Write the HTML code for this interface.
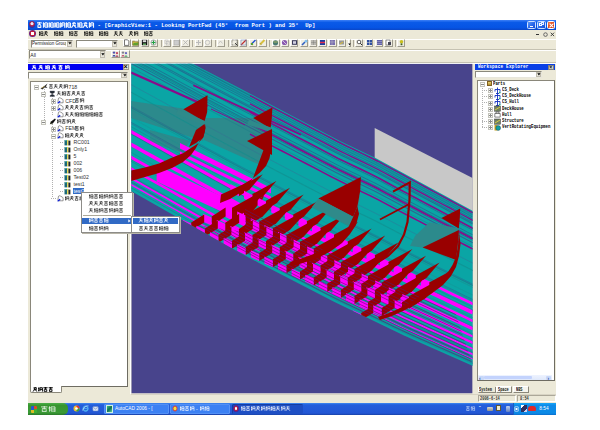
<!DOCTYPE html><html><head><meta charset="utf-8"><style>
html,body{margin:0;padding:0;width:600px;height:430px;overflow:hidden;background:#fff;font-family:"Liberation Sans",sans-serif;}
div{box-sizing:border-box;}
svg{display:block}
</style></head><body>
<div style="position:absolute;left:28px;top:20px;width:528px;height:395px;background:#ECE9D8"></div>
<div style="position:absolute;left:28px;top:20px;width:528px;height:10px;background:linear-gradient(#3d80f6 0,#0a5ae8 25%,#0654e4 75%,#0a46c8 100%)"></div>
<div style="position:absolute;left:29px;top:21px;width:6px;height:7px;border-radius:50%;background:radial-gradient(circle at 50% 40%,#e0e8ff 0 25%,#c02040 35%,#3030a0 70%)"></div>
<svg style="position:absolute;left:37px;top:22px;overflow:visible" width="57.5" height="6"><path d="M0.00 0.90L4.75 0.90M2.38 0.00L2.38 3.30M0.71 2.70L4.04 2.70M0.95 3.30L0.95 5.70M3.80 3.30L3.80 5.70M0.95 5.40L3.80 5.40M6.46 0.30L6.46 5.70M5.75 2.10L7.17 1.50M7.77 0.90L10.50 0.90M7.77 0.90L7.77 5.10M10.50 0.90L10.50 5.80M7.77 3.00L10.50 3.00M7.77 5.10L10.50 5.10M12.21 0.30L12.21 5.70M11.50 2.10L12.93 1.50M11.50 4.50L12.93 3.60M13.53 0.90L16.25 0.90M13.53 0.90L13.53 5.10M16.25 0.90L16.25 5.80M13.53 3.00L16.25 3.00M13.53 5.10L16.25 5.10M17.96 0.30L17.96 5.70M17.25 2.10L18.68 1.50M17.25 4.50L18.68 3.60M19.28 0.90L22.00 0.90M19.28 0.90L19.28 5.10M22.00 0.90L22.00 5.80M19.28 3.00L22.00 3.00M19.28 5.10L22.00 5.10M23.71 0.30L23.71 5.70M23.00 2.10L24.43 1.50M23.00 4.50L24.43 3.60M25.03 0.90L27.75 0.90M25.03 0.90L25.03 5.10M27.75 0.90L27.75 5.80M25.03 3.00L27.75 3.00M29.46 0.30L29.46 5.70M28.75 2.10L30.18 1.50M30.78 0.90L33.50 0.90M30.78 0.90L30.78 5.10M33.50 0.90L33.50 5.80M30.78 3.00L33.50 3.00M30.78 5.10L33.50 5.10M34.98 1.20L38.77 1.20M36.88 0.10L35.92 3.60M35.92 3.60L34.50 5.80M36.64 3.00L39.25 5.80M35.45 3.30L38.77 3.30M37.35 0.30L38.54 2.10M40.96 0.30L40.96 5.70M40.25 2.10L41.67 1.50M42.27 0.90L45.00 0.90M42.27 0.90L42.27 5.10M45.00 0.90L45.00 5.80M42.27 3.00L45.00 3.00M42.27 5.10L45.00 5.10M46.48 1.20L50.27 1.20M48.38 0.10L47.42 3.60M47.42 3.60L46.00 5.80M48.14 3.00L50.75 5.80M46.95 3.30L50.27 3.30M48.85 0.30L50.04 2.10M52.46 0.30L52.46 5.70M51.75 2.10L53.17 1.50M51.75 4.50L53.17 3.60M53.77 0.90L56.50 0.90M53.77 0.90L53.77 5.10M56.50 0.90L56.50 5.80M53.77 3.00L56.50 3.00" stroke="#fff" stroke-opacity="0.95" stroke-width="1.15" fill="none"/></svg>
<div style="position:absolute;left:97.5px;top:20.5px;white-space:nowrap;font:bold 5.5px/9px 'Liberation Mono';color:#fff;white-space:pre;letter-spacing:0.05px">- [GraphicView:1 - Looking PortFwd (45&deg;  from Port ) and 35&deg;  Up]</div>
<div style="position:absolute;left:527px;top:21px;width:9px;height:7.8px;background:linear-gradient(135deg,#5a9af8,#2563e8 60%,#1a50d0);border:0.7px solid #cfe0ff;border-radius:1.5px"></div>
<div style="position:absolute;left:529.5px;top:26px;width:3.5px;height:1.1px;background:#fff"></div>
<div style="position:absolute;left:536.7px;top:21px;width:9px;height:7.8px;background:linear-gradient(135deg,#5a9af8,#2563e8 60%,#1a50d0);border:0.7px solid #cfe0ff;border-radius:1.5px"></div>
<div style="position:absolute;left:539.2px;top:23px;width:3.2px;height:2.8px;border:0.7px solid #fff;border-top-width:1px"></div>
<div style="position:absolute;left:540.6px;top:22.2px;width:3px;height:2.6px;border:0.6px solid #e8f0ff;border-top-width:0.9px"></div>
<div style="position:absolute;left:546.8px;top:21px;width:8.6px;height:8px;background:linear-gradient(135deg,#f08050,#e04a20 55%,#c83a10);border:0.7px solid #fff;border-radius:1.5px"></div>
<svg style="position:absolute;left:548.6px;top:22.6px" width="5" height="5"><path d="M.6 .6l3.8 3.8M4.4 .6L.6 4.4" stroke="#fff" stroke-width="1.1"/></svg>
<div style="position:absolute;left:29px;top:30px;width:7px;height:7px;border-radius:50%;background:radial-gradient(circle at 50% 50%,#fff 0 30%,#d02030 40%,#4020a0 75%)"></div>
<svg style="position:absolute;left:38.5px;top:31.3px;overflow:visible" width="9.8" height="5.2"><path d="M0.59 0.30L0.59 4.90M0.00 1.82L1.17 1.30M0.00 3.90L1.17 3.12M1.77 0.78L3.90 0.78M1.77 0.78L1.77 4.42M3.90 0.78L3.90 5.00M1.77 2.60L3.90 2.60M1.77 4.42L3.90 4.42M5.29 1.04L8.41 1.04M6.85 0.10L6.07 3.12M6.07 3.12L4.90 5.00M6.66 2.60L8.80 5.00M5.68 2.86L8.41 2.86M7.24 0.26L8.21 1.82" stroke="#000" stroke-opacity="0.9" stroke-width="0.75" fill="none"/></svg>
<svg style="position:absolute;left:53.5px;top:31.3px;overflow:visible" width="9.8" height="5.2"><path d="M0.59 0.30L0.59 4.90M0.00 1.82L1.17 1.30M1.77 0.78L3.90 0.78M1.77 0.78L1.77 4.42M3.90 0.78L3.90 5.00M1.77 2.60L3.90 2.60M1.77 4.42L3.90 4.42M5.49 0.30L5.49 4.90M4.90 1.82L6.07 1.30M6.67 0.78L8.80 0.78M6.67 0.78L6.67 4.42M8.80 0.78L8.80 5.00M6.67 2.60L8.80 2.60M6.67 4.42L8.80 4.42" stroke="#000" stroke-opacity="0.9" stroke-width="0.75" fill="none"/></svg>
<svg style="position:absolute;left:68.5px;top:31.3px;overflow:visible" width="9.8" height="5.2"><path d="M0.59 0.30L0.59 4.90M0.00 1.82L1.17 1.30M1.77 0.78L3.90 0.78M1.77 0.78L1.77 4.42M3.90 0.78L3.90 5.00M1.77 2.60L3.90 2.60M1.77 4.42L3.90 4.42M4.90 0.78L8.80 0.78M6.85 0.00L6.85 2.86M5.49 2.34L8.21 2.34M5.68 2.86L5.68 4.94M8.02 2.86L8.02 4.94M5.68 4.68L8.02 4.68" stroke="#000" stroke-opacity="0.9" stroke-width="0.75" fill="none"/></svg>
<svg style="position:absolute;left:83.5px;top:31.3px;overflow:visible" width="9.8" height="5.2"><path d="M0.59 0.30L0.59 4.90M0.00 1.82L1.17 1.30M1.77 0.78L3.90 0.78M1.77 0.78L1.77 4.42M3.90 0.78L3.90 5.00M1.77 2.60L3.90 2.60M1.77 4.42L3.90 4.42M5.49 0.30L5.49 4.90M4.90 1.82L6.07 1.30M6.67 0.78L8.80 0.78M6.67 0.78L6.67 4.42M8.80 0.78L8.80 5.00M6.67 2.60L8.80 2.60M6.67 4.42L8.80 4.42" stroke="#000" stroke-opacity="0.9" stroke-width="0.75" fill="none"/></svg>
<svg style="position:absolute;left:98.5px;top:31.3px;overflow:visible" width="9.8" height="5.2"><path d="M0.59 0.30L0.59 4.90M0.00 1.82L1.17 1.30M0.00 3.90L1.17 3.12M1.77 0.78L3.90 0.78M1.77 0.78L1.77 4.42M3.90 0.78L3.90 5.00M1.77 2.60L3.90 2.60M1.77 4.42L3.90 4.42M5.49 0.30L5.49 4.90M4.90 1.82L6.07 1.30M6.67 0.78L8.80 0.78M6.67 0.78L6.67 4.42M8.80 0.78L8.80 5.00M6.67 2.60L8.80 2.60M6.67 4.42L8.80 4.42" stroke="#000" stroke-opacity="0.9" stroke-width="0.75" fill="none"/></svg>
<svg style="position:absolute;left:113.5px;top:31.3px;overflow:visible" width="9.8" height="5.2"><path d="M0.39 1.04L3.51 1.04M1.95 0.10L1.17 3.12M1.17 3.12L0.00 5.00M1.76 2.60L3.90 5.00M0.78 2.86L3.51 2.86M5.29 1.04L8.41 1.04M6.85 0.10L6.07 3.12M6.07 3.12L4.90 5.00M6.66 2.60L8.80 5.00M5.68 2.86L8.41 2.86" stroke="#000" stroke-opacity="0.9" stroke-width="0.75" fill="none"/></svg>
<svg style="position:absolute;left:128.5px;top:31.3px;overflow:visible" width="9.8" height="5.2"><path d="M0.39 1.04L3.51 1.04M1.95 0.10L1.17 3.12M1.17 3.12L0.00 5.00M1.76 2.60L3.90 5.00M0.78 2.86L3.51 2.86M2.34 0.26L3.32 1.82M5.49 0.30L5.49 4.90M4.90 1.82L6.07 1.30M6.67 0.78L8.80 0.78M6.67 0.78L6.67 4.42M8.80 0.78L8.80 5.00M6.67 2.60L8.80 2.60" stroke="#000" stroke-opacity="0.9" stroke-width="0.75" fill="none"/></svg>
<svg style="position:absolute;left:143.5px;top:31.3px;overflow:visible" width="9.8" height="5.2"><path d="M0.59 0.30L0.59 4.90M0.00 1.82L1.17 1.30M1.77 0.78L3.90 0.78M1.77 0.78L1.77 4.42M3.90 0.78L3.90 5.00M1.77 2.60L3.90 2.60M1.77 4.42L3.90 4.42M4.90 0.78L8.80 0.78M6.85 0.00L6.85 2.86M5.49 2.34L8.21 2.34M5.68 2.86L5.68 4.94M8.02 2.86L8.02 4.94M5.68 4.68L8.02 4.68" stroke="#000" stroke-opacity="0.9" stroke-width="0.75" fill="none"/></svg>
<div style="position:absolute;left:535.5px;top:34.2px;width:3px;height:0.9px;background:#333"></div>
<svg style="position:absolute;left:542.5px;top:31.5px" width="5" height="5"><circle cx="2.5" cy="2.6" r="1.8" fill="none" stroke="#666" stroke-width="1"/></svg>
<svg style="position:absolute;left:550px;top:31.6px" width="5" height="5"><path d="M.7 .7l3.4 3.4M4.1 .7L.7 4.1" stroke="#333" stroke-width="0.9"/></svg>
<div style="position:absolute;left:28px;top:38.5px;width:528px;height:10px;border-top:1px solid #fff"></div>
<div style="position:absolute;left:30.5px;top:39.5px;width:42.5px;height:8px;background:#fff;border:0.8px solid;border-color:#8a887c #e8e6dc #e8e6dc #8a887c"></div>
<div style="position:absolute;left:66.5px;top:40.5px;width:5.5px;height:6px;background:#e8e6dc;border:1px solid #c0bcae"></div>
<svg style="position:absolute;left:67.70px;top:42.30px" width="4" height="3"><path d="M.3 .3h3.2L1.9 2.5z" fill="#000"/></svg>
<div style="position:absolute;left:32.0px;top:41.1px;white-space:nowrap;font:4.5px/6px 'Liberation Sans';color:#222;width:34.0px;overflow:hidden">Permission Group</div>
<div style="position:absolute;left:75.5px;top:39.5px;width:42.5px;height:8px;background:#fff;border:0.8px solid;border-color:#8a887c #e8e6dc #e8e6dc #8a887c"></div>
<div style="position:absolute;left:111.5px;top:40.5px;width:5.5px;height:6px;background:#e8e6dc;border:1px solid #c0bcae"></div>
<svg style="position:absolute;left:112.70px;top:42.30px" width="4" height="3"><path d="M.3 .3h3.2L1.9 2.5z" fill="#000"/></svg>
<div style="position:absolute;left:122.5px;top:38.8px;width:8.3px;height:8.2px;border:0.7px solid;border-color:#fff #9d9a8c #9d9a8c #fff;background:#efede2"></div>
<svg style="position:absolute;left:123.15px;top:39.4px;overflow:visible" width="7" height="7" viewBox="0 0 7 7"><path d="M1.5 .8h3l1.3 1.3v4.3h-4.3z" fill="#fff" stroke="#222" stroke-width=".6"/></svg>
<div style="position:absolute;left:131px;top:38.8px;width:8.3px;height:8.2px;border:0.7px solid;border-color:#fff #9d9a8c #9d9a8c #fff;background:#efede2"></div>
<svg style="position:absolute;left:131.65px;top:39.4px;overflow:visible" width="7" height="7" viewBox="0 0 7 7"><path d="M.6 2.2h2.2l.6.6h2.8v3.4H.6z" fill="#d8c040" stroke="#5a4a10" stroke-width=".5"/><path d="M1.6 3.8h5l-1 2.4h-4.6z" fill="#60a030"/></svg>
<div style="position:absolute;left:140.5px;top:38.8px;width:8.3px;height:8.2px;border:0.7px solid;border-color:#fff #9d9a8c #9d9a8c #fff;background:#efede2"></div>
<svg style="position:absolute;left:141.15px;top:39.4px;overflow:visible" width="7" height="7" viewBox="0 0 7 7"><rect x=".8" y=".8" width="5.4" height="5.4" fill="#111"/><rect x="1.8" y="1.2" width="3.4" height="2" fill="#ddd"/><rect x="2" y="4.4" width="3" height="1.6" fill="#6a6"/></svg>
<div style="position:absolute;left:149.7px;top:38.8px;width:8.3px;height:8.2px;border:0.7px solid;border-color:#fff #9d9a8c #9d9a8c #fff;background:#efede2"></div>
<svg style="position:absolute;left:150.35px;top:39.4px;overflow:visible" width="7" height="7" viewBox="0 0 7 7"><circle cx="3.5" cy="3.5" r="2.6" fill="#eee" stroke="#777" stroke-width=".6"/><path d="M3.5 1.5v4M1.5 3.5h4" stroke="#20a040" stroke-width="1.1"/></svg>
<div style="position:absolute;left:163px;top:38.8px;width:8.3px;height:8.2px;border:0.7px solid;border-color:#fff #9d9a8c #9d9a8c #fff;background:#efede2"></div>
<svg style="position:absolute;left:163.65px;top:39.4px;overflow:visible" width="7" height="7" viewBox="0 0 7 7"><rect x="1" y="1" width="3" height="3.6" fill="none" stroke="#bbb" stroke-width=".6"/><rect x="2.6" y="2.4" width="3" height="3.6" fill="none" stroke="#bbb" stroke-width=".6"/></svg>
<div style="position:absolute;left:172px;top:38.8px;width:8.3px;height:8.2px;border:0.7px solid;border-color:#fff #9d9a8c #9d9a8c #fff;background:#efede2"></div>
<svg style="position:absolute;left:172.65px;top:39.4px;overflow:visible" width="7" height="7" viewBox="0 0 7 7"><rect x="1" y="1.2" width="5" height="4.8" fill="#ccc" stroke="#aaa" stroke-width=".6"/></svg>
<div style="position:absolute;left:181.3px;top:38.8px;width:8.3px;height:8.2px;border:0.7px solid;border-color:#fff #9d9a8c #9d9a8c #fff;background:#efede2"></div>
<svg style="position:absolute;left:181.95000000000002px;top:39.4px;overflow:visible" width="7" height="7" viewBox="0 0 7 7"><path d="M1.2 1.2l4.6 4.6M5.8 1.2l-4.6 4.6" stroke="#aaa" stroke-width=".7"/></svg>
<div style="position:absolute;left:194.7px;top:38.8px;width:8.3px;height:8.2px;border:0.7px solid;border-color:#fff #9d9a8c #9d9a8c #fff;background:#efede2"></div>
<svg style="position:absolute;left:195.35px;top:39.4px;overflow:visible" width="7" height="7" viewBox="0 0 7 7"><path d="M3.5 1v5M1 3.5h5" stroke="#bbb" stroke-width="1"/></svg>
<div style="position:absolute;left:203.8px;top:38.8px;width:8.3px;height:8.2px;border:0.7px solid;border-color:#fff #9d9a8c #9d9a8c #fff;background:#efede2"></div>
<svg style="position:absolute;left:204.45000000000002px;top:39.4px;overflow:visible" width="7" height="7" viewBox="0 0 7 7"><circle cx="3.5" cy="3.5" r="2.2" fill="none" stroke="#bbb" stroke-width=".8"/></svg>
<div style="position:absolute;left:216.7px;top:38.8px;width:8.3px;height:8.2px;border:0.7px solid;border-color:#fff #9d9a8c #9d9a8c #fff;background:#efede2"></div>
<svg style="position:absolute;left:217.35px;top:39.4px;overflow:visible" width="7" height="7" viewBox="0 0 7 7"><path d="M1.5 4.5l2-2.5 2 2.5" fill="none" stroke="#bbb" stroke-width=".8"/></svg>
<div style="position:absolute;left:230px;top:38.8px;width:8.3px;height:8.2px;border:0.7px solid;border-color:#fff #9d9a8c #9d9a8c #fff;background:#efede2"></div>
<svg style="position:absolute;left:230.65px;top:39.4px;overflow:visible" width="7" height="7" viewBox="0 0 7 7"><rect x="1" y="1" width="5" height="5" fill="none" stroke="#333" stroke-width=".6" stroke-dasharray=".8 .6"/><path d="M4 4l2.5 2.5" stroke="#000" stroke-width=".7"/></svg>
<div style="position:absolute;left:239.2px;top:38.8px;width:8.3px;height:8.2px;border:0.7px solid;border-color:#fff #9d9a8c #9d9a8c #fff;background:#efede2"></div>
<svg style="position:absolute;left:239.85px;top:39.4px;overflow:visible" width="7" height="7" viewBox="0 0 7 7"><path d="M1 6l5-5" stroke="#c03030" stroke-width="1.2"/><rect x="1" y="1" width="5" height="5" fill="none" stroke="#6080c0" stroke-width=".5"/></svg>
<div style="position:absolute;left:249.2px;top:38.8px;width:8.3px;height:8.2px;border:0.7px solid;border-color:#fff #9d9a8c #9d9a8c #fff;background:#efede2"></div>
<svg style="position:absolute;left:249.85px;top:39.4px;overflow:visible" width="7" height="7" viewBox="0 0 7 7"><path d="M1 5.5l4.5-4.5" stroke="#2050d0" stroke-width="1.4"/><path d="M1 4l2 2" stroke="#e0b020" stroke-width="1.2"/><circle cx="2" cy="5" r="1" fill="#30a030"/></svg>
<div style="position:absolute;left:258.3px;top:38.8px;width:8.3px;height:8.2px;border:0.7px solid;border-color:#fff #9d9a8c #9d9a8c #fff;background:#efede2"></div>
<svg style="position:absolute;left:258.95px;top:39.4px;overflow:visible" width="7" height="7" viewBox="0 0 7 7"><path d="M1 5.5l4.5-4.5" stroke="#d8c040" stroke-width="2"/><path d="M1.5 4.5l1 1" stroke="#555" stroke-width=".5"/></svg>
<div style="position:absolute;left:271.7px;top:38.8px;width:8.3px;height:8.2px;border:0.7px solid;border-color:#fff #9d9a8c #9d9a8c #fff;background:#efede2"></div>
<svg style="position:absolute;left:272.34999999999997px;top:39.4px;overflow:visible" width="7" height="7" viewBox="0 0 7 7"><circle cx="3.5" cy="3.8" r="2.6" fill="#4a7a70"/><path d="M1.5 3h4" stroke="#d0d060" stroke-width=".7"/></svg>
<div style="position:absolute;left:280.8px;top:38.8px;width:8.3px;height:8.2px;border:0.7px solid;border-color:#fff #9d9a8c #9d9a8c #fff;background:#efede2"></div>
<svg style="position:absolute;left:281.45px;top:39.4px;overflow:visible" width="7" height="7" viewBox="0 0 7 7"><circle cx="3.5" cy="3.5" r="2.6" fill="#8a5ab0"/><path d="M2 2l3 3" stroke="#fff" stroke-width=".6"/></svg>
<div style="position:absolute;left:290px;top:38.8px;width:8.3px;height:8.2px;border:0.7px solid;border-color:#fff #9d9a8c #9d9a8c #fff;background:#efede2"></div>
<svg style="position:absolute;left:290.65px;top:39.4px;overflow:visible" width="7" height="7" viewBox="0 0 7 7"><rect x="1" y="1.2" width="5" height="4.6" fill="#3a3a5a"/><rect x="2" y="2.2" width="3" height="2.6" fill="#d0d0e0"/></svg>
<div style="position:absolute;left:300px;top:38.8px;width:8.3px;height:8.2px;border:0.7px solid;border-color:#fff #9d9a8c #9d9a8c #fff;background:#efede2"></div>
<svg style="position:absolute;left:300.65px;top:39.4px;overflow:visible" width="7" height="7" viewBox="0 0 7 7"><path d="M1 6l3-3" stroke="#3060c0" stroke-width="1.6"/><circle cx="5" cy="2.2" r="1.4" fill="#80c0f0"/></svg>
<div style="position:absolute;left:309.2px;top:38.8px;width:8.3px;height:8.2px;border:0.7px solid;border-color:#fff #9d9a8c #9d9a8c #fff;background:#efede2"></div>
<svg style="position:absolute;left:309.84999999999997px;top:39.4px;overflow:visible" width="7" height="7" viewBox="0 0 7 7"><path d="M1 2h5M1 3.5h5M1 5h5M2 1v5M3.5 1v5M5 1v5" stroke="#555" stroke-width=".4"/></svg>
<div style="position:absolute;left:318.3px;top:38.8px;width:8.3px;height:8.2px;border:0.7px solid;border-color:#fff #9d9a8c #9d9a8c #fff;background:#efede2"></div>
<svg style="position:absolute;left:318.95px;top:39.4px;overflow:visible" width="7" height="7" viewBox="0 0 7 7"><rect x="1" y="1" width="5" height="5" fill="#2040a0"/><path d="M1 3.5h5" stroke="#e03050" stroke-width="1.4"/></svg>
<div style="position:absolute;left:328.4px;top:38.8px;width:8.3px;height:8.2px;border:0.7px solid;border-color:#fff #9d9a8c #9d9a8c #fff;background:#efede2"></div>
<svg style="position:absolute;left:329.04999999999995px;top:39.4px;overflow:visible" width="7" height="7" viewBox="0 0 7 7"><rect x="1" y="1" width="5" height="5" fill="#7a70b0"/><path d="M1 3h5M3 1v5" stroke="#ccc" stroke-width=".4"/></svg>
<div style="position:absolute;left:337.6px;top:38.8px;width:8.3px;height:8.2px;border:0.7px solid;border-color:#fff #9d9a8c #9d9a8c #fff;background:#efede2"></div>
<svg style="position:absolute;left:338.25px;top:39.4px;overflow:visible" width="7" height="7" viewBox="0 0 7 7"><rect x="1" y="1.5" width="5" height="4" fill="#999"/><path d="M2 5l3-2" stroke="#e0c030" stroke-width="1"/></svg>
<div style="position:absolute;left:355px;top:38.8px;width:8.3px;height:8.2px;border:0.7px solid;border-color:#fff #9d9a8c #9d9a8c #fff;background:#efede2"></div>
<svg style="position:absolute;left:355.65px;top:39.4px;overflow:visible" width="7" height="7" viewBox="0 0 7 7"><circle cx="3" cy="3" r="1.8" fill="#fff" stroke="#222" stroke-width=".7"/><path d="M4.3 4.3l1.8 1.8" stroke="#222" stroke-width="1"/></svg>
<div style="position:absolute;left:365px;top:38.8px;width:8.3px;height:8.2px;border:0.7px solid;border-color:#fff #9d9a8c #9d9a8c #fff;background:#efede2"></div>
<svg style="position:absolute;left:365.65px;top:39.4px;overflow:visible" width="7" height="7" viewBox="0 0 7 7"><rect x="1" y="1" width="5" height="5" fill="#3050a0"/><path d="M1 3.5h5M3.5 1v5" stroke="#ddd" stroke-width=".5"/></svg>
<div style="position:absolute;left:375.2px;top:38.8px;width:8.3px;height:8.2px;border:0.7px solid;border-color:#fff #9d9a8c #9d9a8c #fff;background:#efede2"></div>
<svg style="position:absolute;left:375.84999999999997px;top:39.4px;overflow:visible" width="7" height="7" viewBox="0 0 7 7"><rect x="1" y="1" width="5" height="5" fill="#6060a8"/><path d="M1 2.5h5M1 4.5h5" stroke="#ccd" stroke-width=".4"/></svg>
<div style="position:absolute;left:384.4px;top:38.8px;width:8.3px;height:8.2px;border:0.7px solid;border-color:#fff #9d9a8c #9d9a8c #fff;background:#efede2"></div>
<svg style="position:absolute;left:385.04999999999995px;top:39.4px;overflow:visible" width="7" height="7" viewBox="0 0 7 7"><rect x="1" y="1" width="4" height="5" fill="#fff" stroke="#333" stroke-width=".5"/><rect x="3" y="3" width="3" height="3" fill="#445"/></svg>
<div style="position:absolute;left:397.2px;top:38.8px;width:8.3px;height:8.2px;border:0.7px solid;border-color:#fff #9d9a8c #9d9a8c #fff;background:#efede2"></div>
<svg style="position:absolute;left:397.84999999999997px;top:39.4px;overflow:visible" width="7" height="7" viewBox="0 0 7 7"><circle cx="3.5" cy="2.8" r="1.8" fill="#c8c020"/><rect x="2.6" y="4.4" width="1.8" height="1.8" fill="#406020"/></svg>
<div style="position:absolute;left:347.7px;top:38.8px;width:3.7px;height:8.2px;border:0.7px solid;border-color:#fff #9d9a8c #9d9a8c #fff;background:#efede2"></div>
<svg style="position:absolute;left:348.3px;top:42.5px" width="3" height="3"><path d="M.2 .4h2.6L1.5 2.2z" fill="#000"/></svg>
<div style="position:absolute;left:160.5px;top:39.5px;width:0.6px;height:7px;background:#aca899"></div>
<div style="position:absolute;left:192px;top:39.5px;width:0.6px;height:7px;background:#aca899"></div>
<div style="position:absolute;left:214.5px;top:39.5px;width:0.6px;height:7px;background:#aca899"></div>
<div style="position:absolute;left:227.5px;top:39.5px;width:0.6px;height:7px;background:#aca899"></div>
<div style="position:absolute;left:269px;top:39.5px;width:0.6px;height:7px;background:#aca899"></div>
<div style="position:absolute;left:353px;top:39.5px;width:0.6px;height:7px;background:#aca899"></div>
<div style="position:absolute;left:395px;top:39.5px;width:0.6px;height:7px;background:#aca899"></div>
<div style="position:absolute;left:28px;top:48.5px;width:528px;height:1px;background:#c5c2b2"></div>
<div style="position:absolute;left:28px;top:49.5px;width:528px;height:1px;background:#fff"></div>
<div style="position:absolute;left:28.8px;top:50px;width:77.5px;height:8.5px;background:#fff;border:0.8px solid;border-color:#8a887c #e8e6dc #e8e6dc #8a887c"></div>
<div style="position:absolute;left:99.8px;top:51px;width:5.5px;height:6.5px;background:#e8e6dc;border:1px solid #c0bcae"></div>
<svg style="position:absolute;left:101.00px;top:53.05px" width="4" height="3"><path d="M.3 .3h3.2L1.9 2.5z" fill="#000"/></svg>
<div style="position:absolute;left:30.3px;top:51.85px;white-space:nowrap;font:5px/6px 'Liberation Sans';color:#222;width:69.0px;overflow:hidden">All</div>
<div style="position:absolute;left:110.5px;top:50px;width:9px;height:8.2px;border:0.7px solid;border-color:#fff #9d9a8c #9d9a8c #fff;background:#efede2"></div>
<svg style="position:absolute;left:111.5px;top:51px" width="7" height="6"><circle cx="2" cy="1.6" r="1.2" fill="#5050b0"/><path d="M.5 5.5c0-2 3-2 3 0z" fill="#3040a0"/><circle cx="5" cy="2.2" r="1.1" fill="#c04060"/><path d="M3.5 5.8c0-1.8 3-1.8 3 0z" fill="#a03050"/></svg>
<div style="position:absolute;left:120px;top:50px;width:9.5px;height:8.2px;border:0.7px solid;border-color:#fff #9d9a8c #9d9a8c #fff;background:#efede2"></div>
<svg style="position:absolute;left:121px;top:51px" width="7" height="6"><circle cx="2" cy="1.6" r="1.2" fill="#808090"/><path d="M.5 5.5c0-2 3-2 3 0z" fill="#c05070"/><circle cx="5" cy="2.2" r="1.1" fill="#6060c0"/><path d="M3.5 5.8c0-1.8 3-1.8 3 0z" fill="#40a060"/></svg>
<div style="position:absolute;left:28px;top:62.2px;width:528px;height:1px;background:#c5c2b2"></div>
<div style="position:absolute;left:28px;top:63.2px;width:528px;height:0.6px;background:#fff"></div>
<svg style="position:absolute;left:0;top:0" width="600" height="430"><clipPath id="vpc"><rect x="131.3" y="63.7" width="341.3" height="329.8"/></clipPath><g clip-path="url(#vpc)"><rect x="131.3" y="63.7" width="341.3" height="329.8" fill="#48448c"/><polygon points="374.7,128.0 473.0,178.2 473.0,240.0 374.7,190.0" fill="#c8c8c8" /><polygon points="120.0,24.5 193.8,64.2 340.0,141.0 374.6,157.5 473.0,211.0 473.0,366.0 404.0,335.5 334.0,301.7 260.0,263.6 235.0,250.0 132.3,191.7 120.0,185.0" fill="#0aa5a5" /><clipPath id="bc"><polygon points="120.0,24.5 193.8,64.2 340.0,141.0 374.6,157.5 473.0,211.0 473.0,366.0 404.0,335.5 334.0,301.7 260.0,263.6 235.0,250.0 132.3,191.7 120.0,185.0"/></clipPath><g clip-path="url(#bc)"><polygon points="131.0,101.0 183.0,108.6 204.0,121.0 203.0,141.0 131.0,118.0" fill="#2c8a8c" /><polygon points="204.0,118.0 253.0,118.0 272.0,128.0 271.0,150.0 260.0,165.0 204.0,140.0" fill="#2c8a8c" /><polygon points="150.0,130.0 190.0,141.0 183.0,153.0 150.0,142.0" fill="#2c8a8c" /><polygon points="322.0,198.0 360.0,196.0 358.0,207.0 346.0,221.0 312.0,205.0" fill="#2f8a8a" /><polyline points="120.0,86.5 128.0,90.8 136.0,95.2 144.0,99.6 152.0,104.0 160.0,108.4 168.0,112.7 176.0,117.1 184.0,121.5 192.0,125.9 200.0,130.3 208.0,134.6 216.0,138.9 224.0,143.3 232.0,147.6 240.0,151.9 248.0,156.2 256.0,160.4 264.0,164.6 272.0,168.8 280.0,173.0 288.0,177.1 296.0,181.3 304.0,185.5 312.0,189.7 320.0,193.8 328.0,198.0 336.0,202.1 344.0,206.1 352.0,209.9 360.0,213.8 368.0,217.6 376.0,221.5 384.0,225.7 392.0,229.8 400.0,234.0 408.0,238.1 416.0,242.1 424.0,246.1 432.0,250.2 440.0,254.2 448.0,258.2 456.0,262.3 464.0,266.3 472.0,270.4 473.0,270.9" fill="none" stroke="#1a9090" stroke-width="0.5" /><polyline points="120.0,103.6 128.0,108.0 136.0,112.3 144.0,116.8 152.0,121.2 160.0,125.6 168.0,130.0 176.0,134.4 184.0,138.9 192.0,143.3 200.0,147.7 208.0,152.0 216.0,156.4 224.0,160.8 232.0,165.1 240.0,169.4 248.0,173.7 256.0,178.0 264.0,182.2 272.0,186.4 280.0,190.5 288.0,194.7 296.0,198.9 304.0,203.0 312.0,207.2 320.0,211.3 328.0,215.5 336.0,219.6 344.0,223.6 352.0,227.4 360.0,231.3 368.0,235.1 376.0,239.0 384.0,243.1 392.0,247.2 400.0,251.3 408.0,255.3 416.0,259.3 424.0,263.2 432.0,267.2 440.0,271.1 448.0,275.1 456.0,279.0 464.0,283.0 472.0,286.9 473.0,287.4" fill="none" stroke="#1a9090" stroke-width="0.7" /><polyline points="120.0,116.3 128.0,120.6 136.0,125.0 144.0,129.4 152.0,133.9 160.0,138.3 168.0,142.8 176.0,147.2 184.0,151.6 192.0,156.1 200.0,160.5 208.0,164.9 216.0,169.3 224.0,173.7 232.0,178.1 240.0,182.4 248.0,186.7 256.0,191.0 264.0,195.2 272.0,199.3 280.0,203.5 288.0,207.7 296.0,211.8 304.0,216.0 312.0,220.1 320.0,224.3 328.0,228.4 336.0,232.5 344.0,236.5 352.0,240.3 360.0,244.2 368.0,248.0 376.0,251.9 384.0,256.0 392.0,260.0 400.0,264.1 408.0,268.1 416.0,272.0 424.0,275.8 432.0,279.7 440.0,283.6 448.0,287.5 456.0,291.4 464.0,295.3 472.0,299.1 473.0,299.6" fill="none" stroke="#2a5a8c" stroke-width="0.5" /><polyline points="120.0,101.7 128.0,106.0 136.0,110.4 144.0,114.8 152.0,119.3 160.0,123.7 168.0,128.1 176.0,132.5 184.0,136.9 192.0,141.3 200.0,145.7 208.0,150.1 216.0,154.4 224.0,158.8 232.0,163.2 240.0,167.5 248.0,171.8 256.0,176.0 264.0,180.3 272.0,184.4 280.0,188.6 288.0,192.7 296.0,196.9 304.0,201.1 312.0,205.2 320.0,209.4 328.0,213.6 336.0,217.7 344.0,221.6 352.0,225.5 360.0,229.3 368.0,233.1 376.0,237.0 384.0,241.1 392.0,245.3 400.0,249.4 408.0,253.4 416.0,257.4 424.0,261.3 432.0,265.3 440.0,269.2 448.0,273.2 456.0,277.2 464.0,281.1 472.0,285.1 473.0,285.6" fill="none" stroke="#1c7a8a" stroke-width="0.7" /><polyline points="120.0,29.7 128.0,34.0 136.0,38.3 144.0,42.6 152.0,46.9 160.0,51.2 168.0,55.5 176.0,59.8 184.0,64.1 192.0,68.5 200.0,72.7 208.0,76.9 216.0,81.1 224.0,85.3 232.0,89.5 240.0,93.7 248.0,98.0 256.0,102.2 264.0,106.4 272.0,110.6 280.0,114.8 288.0,119.0 296.0,123.2 304.0,127.4 312.0,131.6 320.0,135.8 328.0,140.0 336.0,144.2 344.0,148.2 352.0,152.0 360.0,155.8 368.0,159.6 376.0,163.5 384.0,167.9 392.0,172.2 400.0,176.5 408.0,180.9 416.0,185.2 424.0,189.5 432.0,193.8 440.0,198.1 448.0,202.5 456.0,206.8 464.0,211.1 472.0,215.4 473.0,216.0" fill="none" stroke="#1c7a8a" stroke-width="0.4" /><polyline points="120.0,61.5 128.0,65.8 136.0,70.1 144.0,74.5 152.0,78.9 160.0,83.2 168.0,87.6 176.0,91.9 184.0,96.3 192.0,100.7 200.0,105.0 208.0,109.2 216.0,113.5 224.0,117.8 232.0,122.1 240.0,126.3 248.0,130.6 256.0,134.8 264.0,139.0 272.0,143.2 280.0,147.4 288.0,151.6 296.0,155.7 304.0,159.9 312.0,164.1 320.0,168.3 328.0,172.5 336.0,176.6 344.0,180.6 352.0,184.5 360.0,188.3 368.0,192.1 376.0,196.0 384.0,200.2 392.0,204.5 400.0,208.7 408.0,212.9 416.0,217.1 424.0,221.2 432.0,225.4 440.0,229.6 448.0,233.7 456.0,237.9 464.0,242.0 472.0,246.2 473.0,246.7" fill="none" stroke="#1c7a8a" stroke-width="0.5" /><polyline points="120.0,78.6 128.0,82.9 136.0,87.3 144.0,91.7 152.0,96.0 160.0,100.4 168.0,104.8 176.0,109.2 184.0,113.6 192.0,118.0 200.0,122.3 208.0,126.6 216.0,130.9 224.0,135.2 232.0,139.6 240.0,143.8 248.0,148.1 256.0,152.3 264.0,156.6 272.0,160.7 280.0,164.9 288.0,169.1 296.0,173.3 304.0,177.4 312.0,181.6 320.0,185.8 328.0,190.0 336.0,194.1 344.0,198.1 352.0,201.9 360.0,205.7 368.0,209.6 376.0,213.5 384.0,217.6 392.0,221.8 400.0,226.0 408.0,230.1 416.0,234.2 424.0,238.3 432.0,242.4 440.0,246.4 448.0,250.5 456.0,254.6 464.0,258.7 472.0,262.7 473.0,263.3" fill="none" stroke="#3a6a96" stroke-width="0.4" /><polyline points="120.0,25.8 128.0,30.1 136.0,34.4 144.0,38.7 152.0,43.0 160.0,47.3 168.0,51.6 176.0,55.9 184.0,60.2 192.0,64.6 200.0,68.8 208.0,73.0 216.0,77.2 224.0,81.4 232.0,85.6 240.0,89.8 248.0,94.0 256.0,98.2 264.0,102.4 272.0,106.6 280.0,110.8 288.0,115.0 296.0,119.2 304.0,123.4 312.0,127.6 320.0,131.8 328.0,136.0 336.0,140.2 344.0,144.2 352.0,148.1 360.0,151.9 368.0,155.7 376.0,159.6 384.0,163.9 392.0,168.3 400.0,172.6 408.0,177.0 416.0,181.3 424.0,185.7 432.0,190.0 440.0,194.3 448.0,198.7 456.0,203.0 464.0,207.4 472.0,211.7 473.0,212.3" fill="none" stroke="#1c7a8a" stroke-width="0.5" /><polyline points="120.0,52.3 128.0,56.6 136.0,61.0 144.0,65.3 152.0,69.6 160.0,74.0 168.0,78.3 176.0,82.7 184.0,87.0 192.0,91.4 200.0,95.6 208.0,99.9 216.0,104.2 224.0,108.4 232.0,112.7 240.0,116.9 248.0,121.2 256.0,125.4 264.0,129.6 272.0,133.8 280.0,138.0 288.0,142.2 296.0,146.3 304.0,150.5 312.0,154.7 320.0,158.9 328.0,163.1 336.0,167.3 344.0,171.3 352.0,175.1 360.0,178.9 368.0,182.7 376.0,186.6 384.0,190.9 392.0,195.2 400.0,199.4 408.0,203.7 416.0,207.9 424.0,212.1 432.0,216.3 440.0,220.5 448.0,224.7 456.0,228.9 464.0,233.1 472.0,237.3 473.0,237.9" fill="none" stroke="#0c8a8a" stroke-width="0.4" /><polyline points="120.0,100.3 128.0,104.6 136.0,109.0 144.0,113.4 152.0,117.8 160.0,122.3 168.0,126.7 176.0,131.1 184.0,135.5 192.0,139.9 200.0,144.3 208.0,148.7 216.0,153.0 224.0,157.4 232.0,161.8 240.0,166.1 248.0,170.3 256.0,174.6 264.0,178.8 272.0,183.0 280.0,187.2 288.0,191.3 296.0,195.5 304.0,199.6 312.0,203.8 320.0,208.0 328.0,212.1 336.0,216.3 344.0,220.2 352.0,224.0 360.0,227.9 368.0,231.7 376.0,235.6 384.0,239.7 392.0,243.8 400.0,248.0 408.0,252.0 416.0,256.0 424.0,259.9 432.0,263.9 440.0,267.9 448.0,271.8 456.0,275.8 464.0,279.8 472.0,283.7 473.0,284.2" fill="none" stroke="#2a5a8c" stroke-width="0.4" /><polyline points="120.0,86.0 128.0,90.3 136.0,94.7 144.0,99.1 152.0,103.5 160.0,107.9 168.0,112.2 176.0,116.6 184.0,121.0 192.0,125.4 200.0,129.8 208.0,134.1 216.0,138.4 224.0,142.8 232.0,147.1 240.0,151.4 248.0,155.7 256.0,159.9 264.0,164.1 272.0,168.3 280.0,172.5 288.0,176.6 296.0,180.8 304.0,185.0 312.0,189.2 320.0,193.3 328.0,197.5 336.0,201.6 344.0,205.6 352.0,209.4 360.0,213.3 368.0,217.1 376.0,221.0 384.0,225.1 392.0,229.3 400.0,233.5 408.0,237.6 416.0,241.6 424.0,245.7 432.0,249.7 440.0,253.7 448.0,257.8 456.0,261.8 464.0,265.8 472.0,269.9 473.0,270.4" fill="none" stroke="#0c8a8a" stroke-width="0.4" /><polyline points="120.0,37.7 128.0,42.0 136.0,46.3 144.0,50.6 152.0,54.9 160.0,59.3 168.0,63.6 176.0,67.9 184.0,72.2 192.0,76.5 200.0,80.8 208.0,85.0 216.0,89.3 224.0,93.5 232.0,97.7 240.0,101.9 248.0,106.2 256.0,110.4 264.0,114.6 272.0,118.8 280.0,123.0 288.0,127.2 296.0,131.4 304.0,135.5 312.0,139.7 320.0,143.9 328.0,148.1 336.0,152.3 344.0,156.3 352.0,160.1 360.0,164.0 368.0,167.8 376.0,171.7 384.0,176.0 392.0,180.3 400.0,184.6 408.0,188.9 416.0,193.2 424.0,197.5 432.0,201.8 440.0,206.0 448.0,210.3 456.0,214.6 464.0,218.9 472.0,223.2 473.0,223.7" fill="none" stroke="#2a5a8c" stroke-width="0.4" /><polyline points="120.0,101.5 128.0,105.8 136.0,110.2 144.0,114.6 152.0,119.0 160.0,123.4 168.0,127.9 176.0,132.3 184.0,136.7 192.0,141.1 200.0,145.5 208.0,149.8 216.0,154.2 224.0,158.6 232.0,162.9 240.0,167.2 248.0,171.5 256.0,175.8 264.0,180.0 272.0,184.2 280.0,188.3 288.0,192.5 296.0,196.7 304.0,200.8 312.0,205.0 320.0,209.2 328.0,213.3 336.0,217.4 344.0,221.4 352.0,225.2 360.0,229.1 368.0,232.9 376.0,236.8 384.0,240.9 392.0,245.0 400.0,249.1 408.0,253.2 416.0,257.1 424.0,261.1 432.0,265.1 440.0,269.0 448.0,273.0 456.0,276.9 464.0,280.9 472.0,284.8 473.0,285.3" fill="none" stroke="#1c7a8a" stroke-width="0.4" /><polyline points="120.0,53.3 128.0,57.6 136.0,61.9 144.0,66.3 152.0,70.6 160.0,75.0 168.0,79.3 176.0,83.7 184.0,88.0 192.0,92.4 200.0,96.6 208.0,100.9 216.0,105.2 224.0,109.4 232.0,113.7 240.0,117.9 248.0,122.2 256.0,126.4 264.0,130.6 272.0,134.8 280.0,139.0 288.0,143.2 296.0,147.3 304.0,151.5 312.0,155.7 320.0,159.9 328.0,164.1 336.0,168.3 344.0,172.3 352.0,176.1 360.0,179.9 368.0,183.7 376.0,187.6 384.0,191.9 392.0,196.2 400.0,200.4 408.0,204.6 416.0,208.9 424.0,213.1 432.0,217.3 440.0,221.5 448.0,225.7 456.0,229.9 464.0,234.1 472.0,238.3 473.0,238.8" fill="none" stroke="#1c7a8a" stroke-width="0.7" /><polyline points="120.0,111.7 128.0,116.0 136.0,120.4 144.0,124.8 152.0,129.3 160.0,133.7 168.0,138.1 176.0,142.6 184.0,147.0 192.0,151.4 200.0,155.8 208.0,160.2 216.0,164.6 224.0,169.0 232.0,173.4 240.0,177.7 248.0,182.0 256.0,186.3 264.0,190.5 272.0,194.6 280.0,198.8 288.0,202.9 296.0,207.1 304.0,211.3 312.0,215.4 320.0,219.6 328.0,223.7 336.0,227.9 344.0,231.8 352.0,235.6 360.0,239.5 368.0,243.3 376.0,247.2 384.0,251.3 392.0,255.4 400.0,259.4 408.0,263.4 416.0,267.4 424.0,271.3 432.0,275.2 440.0,279.1 448.0,283.0 456.0,286.9 464.0,290.8 472.0,294.7 473.0,295.2" fill="none" stroke="#1a9090" stroke-width="0.4" /><polyline points="120.0,42.6 128.0,46.9 136.0,51.2 144.0,55.5 152.0,59.9 160.0,64.2 168.0,68.5 176.0,72.9 184.0,77.2 192.0,81.5 200.0,85.8 208.0,90.0 216.0,94.3 224.0,98.5 232.0,102.7 240.0,107.0 248.0,111.2 256.0,115.4 264.0,119.6 272.0,123.8 280.0,128.0 288.0,132.2 296.0,136.4 304.0,140.6 312.0,144.8 320.0,149.0 328.0,153.2 336.0,157.3 344.0,161.3 352.0,165.2 360.0,169.0 368.0,172.8 376.0,176.7 384.0,181.0 392.0,185.3 400.0,189.6 408.0,193.9 416.0,198.1 424.0,202.4 432.0,206.6 440.0,210.9 448.0,215.2 456.0,219.4 464.0,223.7 472.0,227.9 473.0,228.5" fill="none" stroke="#1a9090" stroke-width="0.4" /><polyline points="120.0,120.7 128.0,125.0 136.0,129.4 144.0,133.9 152.0,138.3 160.0,142.7 168.0,147.2 176.0,151.6 184.0,156.1 192.0,160.5 200.0,164.9 208.0,169.3 216.0,173.8 224.0,178.2 232.0,182.6 240.0,186.9 248.0,191.2 256.0,195.5 264.0,199.7 272.0,203.9 280.0,208.0 288.0,212.2 296.0,216.3 304.0,220.5 312.0,224.6 320.0,228.8 328.0,232.9 336.0,237.0 344.0,241.0 352.0,244.8 360.0,248.6 368.0,252.5 376.0,256.4 384.0,260.4 392.0,264.5 400.0,268.5 408.0,272.5 416.0,276.4 424.0,280.2 432.0,284.1 440.0,288.0 448.0,291.8 456.0,295.7 464.0,299.5 472.0,303.4 473.0,303.9" fill="none" stroke="#0c8a8a" stroke-width="0.5" /><polyline points="120.0,26.6 128.0,31.0 136.0,35.3 144.0,39.6 152.0,43.9 160.0,48.2 168.0,52.5 176.0,56.8 184.0,61.1 192.0,65.4 200.0,69.6 208.0,73.8 216.0,78.0 224.0,82.3 232.0,86.5 240.0,90.7 248.0,94.9 256.0,99.1 264.0,103.3 272.0,107.5 280.0,111.7 288.0,115.9 296.0,120.1 304.0,124.3 312.0,128.5 320.0,132.7 328.0,136.9 336.0,141.1 344.0,145.1 352.0,148.9 360.0,152.7 368.0,156.5 376.0,160.5 384.0,164.8 392.0,169.1 400.0,173.5 408.0,177.8 416.0,182.2 424.0,186.5 432.0,190.8 440.0,195.2 448.0,199.5 456.0,203.9 464.0,208.2 472.0,212.5 473.0,213.1" fill="none" stroke="#0c8a8a" stroke-width="0.4" /><polyline points="120.0,117.6 128.0,122.0 136.0,126.3 144.0,130.8 152.0,135.2 160.0,139.7 168.0,144.1 176.0,148.5 184.0,153.0 192.0,157.4 200.0,161.8 208.0,166.2 216.0,170.6 224.0,175.0 232.0,179.4 240.0,183.8 248.0,188.1 256.0,192.3 264.0,196.6 272.0,200.7 280.0,204.9 288.0,209.0 296.0,213.2 304.0,217.3 312.0,221.5 320.0,225.6 328.0,229.8 336.0,233.9 344.0,237.8 352.0,241.7 360.0,245.5 368.0,249.4 376.0,253.2 384.0,257.3 392.0,261.4 400.0,265.5 408.0,269.4 416.0,273.3 424.0,277.2 432.0,281.1 440.0,284.9 448.0,288.8 456.0,292.7 464.0,296.6 472.0,300.4 473.0,300.9" fill="none" stroke="#355a90" stroke-width="0.4" /><polyline points="120.0,57.5 128.0,61.8 136.0,66.2 144.0,70.5 152.0,74.9 160.0,79.2 168.0,83.6 176.0,87.9 184.0,92.3 192.0,96.6 200.0,100.9 208.0,105.2 216.0,109.5 224.0,113.7 232.0,118.0 240.0,122.3 248.0,126.5 256.0,130.7 264.0,134.9 272.0,139.1 280.0,143.3 288.0,147.5 296.0,151.7 304.0,155.9 312.0,160.1 320.0,164.2 328.0,168.4 336.0,172.6 344.0,176.6 352.0,180.4 360.0,184.2 368.0,188.0 376.0,191.9 384.0,196.2 392.0,200.4 400.0,204.7 408.0,208.9 416.0,213.1 424.0,217.3 432.0,221.5 440.0,225.6 448.0,229.8 456.0,234.0 464.0,238.2 472.0,242.4 473.0,242.9" fill="none" stroke="#3a6a96" stroke-width="0.7" /><polyline points="120.0,26.4 128.0,30.7 136.0,35.0 144.0,39.3 152.0,43.6 160.0,48.0 168.0,52.3 176.0,56.6 184.0,60.9 192.0,65.2 200.0,69.4 208.0,73.6 216.0,77.8 224.0,82.0 232.0,86.2 240.0,90.4 248.0,94.6 256.0,98.8 264.0,103.1 272.0,107.3 280.0,111.5 288.0,115.7 296.0,119.9 304.0,124.1 312.0,128.3 320.0,132.5 328.0,136.7 336.0,140.9 344.0,144.9 352.0,148.7 360.0,152.5 368.0,156.3 376.0,160.2 384.0,164.6 392.0,168.9 400.0,173.3 408.0,177.6 416.0,181.9 424.0,186.3 432.0,190.6 440.0,195.0 448.0,199.3 456.0,203.6 464.0,208.0 472.0,212.3 473.0,212.9" fill="none" stroke="#2c5088" stroke-width="0.55" /><polyline points="120.0,28.5 128.0,32.8 136.0,37.1 144.0,41.4 152.0,45.7 160.0,50.1 168.0,54.4 176.0,58.7 184.0,63.0 192.0,67.3 200.0,71.5 208.0,75.7 216.0,79.9 224.0,84.2 232.0,88.4 240.0,92.6 248.0,96.8 256.0,101.0 264.0,105.2 272.0,109.4 280.0,113.6 288.0,117.8 296.0,122.0 304.0,126.2 312.0,130.4 320.0,134.6 328.0,138.8 336.0,143.0 344.0,147.0 352.0,150.8 360.0,154.6 368.0,158.4 376.0,162.4 384.0,166.7 392.0,171.0 400.0,175.4 408.0,179.7 416.0,184.0 424.0,188.4 432.0,192.7 440.0,197.0 448.0,201.3 456.0,205.7 464.0,210.0 472.0,214.3 473.0,214.9" fill="none" stroke="#2c5088" stroke-width="0.55" /><polyline points="120.0,30.9 128.0,35.2 136.0,39.5 144.0,43.8 152.0,48.2 160.0,52.5 168.0,56.8 176.0,61.1 184.0,65.4 192.0,69.7 200.0,74.0 208.0,78.2 216.0,82.4 224.0,86.6 232.0,90.8 240.0,95.0 248.0,99.2 256.0,103.5 264.0,107.7 272.0,111.9 280.0,116.1 288.0,120.3 296.0,124.5 304.0,128.7 312.0,132.9 320.0,137.1 328.0,141.3 336.0,145.4 344.0,149.5 352.0,153.3 360.0,157.1 368.0,160.9 376.0,164.8 384.0,169.1 392.0,173.5 400.0,177.8 408.0,182.1 416.0,186.4 424.0,190.8 432.0,195.1 440.0,199.4 448.0,203.7 456.0,208.0 464.0,212.3 472.0,216.7 473.0,217.2" fill="none" stroke="#2c5088" stroke-width="0.55" /><polyline points="120.0,32.8 128.0,37.2 136.0,41.5 144.0,45.8 152.0,50.1 160.0,54.4 168.0,58.7 176.0,63.0 184.0,67.4 192.0,71.7 200.0,75.9 208.0,80.1 216.0,84.4 224.0,88.6 232.0,92.8 240.0,97.0 248.0,101.2 256.0,105.4 264.0,109.6 272.0,113.8 280.0,118.0 288.0,122.2 296.0,126.4 304.0,130.6 312.0,134.8 320.0,139.0 328.0,143.2 336.0,147.4 344.0,151.4 352.0,155.2 360.0,159.1 368.0,162.9 376.0,166.8 384.0,171.1 392.0,175.4 400.0,179.7 408.0,184.1 416.0,188.4 424.0,192.7 432.0,197.0 440.0,201.3 448.0,205.6 456.0,209.9 464.0,214.2 472.0,218.5 473.0,219.1" fill="none" stroke="#2c5088" stroke-width="0.55" /><polyline points="120.0,36.5 128.0,40.8 136.0,45.2 144.0,49.5 152.0,53.8 160.0,58.1 168.0,62.4 176.0,66.8 184.0,71.1 192.0,75.4 200.0,79.7 208.0,83.9 216.0,88.1 224.0,92.3 232.0,96.6 240.0,100.8 248.0,105.0 256.0,109.2 264.0,113.4 272.0,117.6 280.0,121.8 288.0,126.0 296.0,130.2 304.0,134.4 312.0,138.6 320.0,142.8 328.0,147.0 336.0,151.2 344.0,155.2 352.0,159.0 360.0,162.8 368.0,166.6 376.0,170.5 384.0,174.9 392.0,179.2 400.0,183.5 408.0,187.8 416.0,192.1 424.0,196.4 432.0,200.6 440.0,204.9 448.0,209.2 456.0,213.5 464.0,217.8 472.0,222.1 473.0,222.6" fill="none" stroke="#2c5088" stroke-width="0.55" /><polyline points="120.0,38.1 128.0,42.5 136.0,46.8 144.0,51.1 152.0,55.4 160.0,59.7 168.0,64.1 176.0,68.4 184.0,72.7 192.0,77.0 200.0,81.3 208.0,85.5 216.0,89.7 224.0,94.0 232.0,98.2 240.0,102.4 248.0,106.6 256.0,110.9 264.0,115.1 272.0,119.3 280.0,123.5 288.0,127.7 296.0,131.8 304.0,136.0 312.0,140.2 320.0,144.4 328.0,148.6 336.0,152.8 344.0,156.8 352.0,160.6 360.0,164.5 368.0,168.3 376.0,172.2 384.0,176.5 392.0,180.8 400.0,185.1 408.0,189.4 416.0,193.7 424.0,198.0 432.0,202.2 440.0,206.5 448.0,210.8 456.0,215.1 464.0,219.4 472.0,223.6 473.0,224.2" fill="none" stroke="#2c5088" stroke-width="0.55" /><polyline points="120.0,43.0 128.0,47.3 136.0,51.6 144.0,55.9 152.0,60.2 160.0,64.6 168.0,68.9 176.0,73.2 184.0,77.6 192.0,81.9 200.0,86.2 208.0,90.4 216.0,94.6 224.0,98.9 232.0,103.1 240.0,107.4 248.0,111.6 256.0,115.8 264.0,120.0 272.0,124.2 280.0,128.4 288.0,132.6 296.0,136.8 304.0,141.0 312.0,145.2 320.0,149.4 328.0,153.5 336.0,157.7 344.0,161.7 352.0,165.5 360.0,169.4 368.0,173.2 376.0,177.1 384.0,181.4 392.0,185.7 400.0,190.0 408.0,194.2 416.0,198.5 424.0,202.8 432.0,207.0 440.0,211.3 448.0,215.5 456.0,219.8 464.0,224.0 472.0,228.3 473.0,228.8" fill="none" stroke="#2c5088" stroke-width="0.55" /><polyline points="120.0,44.6 128.0,48.9 136.0,53.2 144.0,57.5 152.0,61.9 160.0,66.2 168.0,70.5 176.0,74.9 184.0,79.2 192.0,83.5 200.0,87.8 208.0,92.0 216.0,96.3 224.0,100.5 232.0,104.8 240.0,109.0 248.0,113.2 256.0,117.4 264.0,121.6 272.0,125.8 280.0,130.0 288.0,134.2 296.0,138.4 304.0,142.6 312.0,146.8 320.0,151.0 328.0,155.2 336.0,159.4 344.0,163.4 352.0,167.2 360.0,171.0 368.0,174.8 376.0,178.7 384.0,183.0 392.0,187.3 400.0,191.6 408.0,195.9 416.0,200.1 424.0,204.4 432.0,208.6 440.0,212.9 448.0,217.1 456.0,221.3 464.0,225.6 472.0,229.8 473.0,230.4" fill="none" stroke="#2c5088" stroke-width="0.55" /><polyline points="120.0,49.4 128.0,53.7 136.0,58.0 144.0,62.4 152.0,66.7 160.0,71.0 168.0,75.4 176.0,79.7 184.0,84.1 192.0,88.4 200.0,92.7 208.0,96.9 216.0,101.2 224.0,105.4 232.0,109.7 240.0,113.9 248.0,118.2 256.0,122.4 264.0,126.6 272.0,130.8 280.0,135.0 288.0,139.2 296.0,143.3 304.0,147.5 312.0,151.7 320.0,155.9 328.0,160.1 336.0,164.3 344.0,168.3 352.0,172.1 360.0,175.9 368.0,179.7 376.0,183.6 384.0,187.9 392.0,192.2 400.0,196.5 408.0,200.7 416.0,204.9 424.0,209.2 432.0,213.4 440.0,217.6 448.0,221.8 456.0,226.1 464.0,230.3 472.0,234.5 473.0,235.0" fill="none" stroke="#2c5088" stroke-width="0.55" /><polyline points="120.0,51.8 128.0,56.1 136.0,60.4 144.0,64.8 152.0,69.1 160.0,73.5 168.0,77.8 176.0,82.1 184.0,86.5 192.0,90.8 200.0,95.1 208.0,99.4 216.0,103.6 224.0,107.9 232.0,112.2 240.0,116.4 248.0,120.6 256.0,124.8 264.0,129.1 272.0,133.2 280.0,137.4 288.0,141.6 296.0,145.8 304.0,150.0 312.0,154.2 320.0,158.4 328.0,162.6 336.0,166.7 344.0,170.7 352.0,174.5 360.0,178.4 368.0,182.2 376.0,186.1 384.0,190.4 392.0,194.6 400.0,198.9 408.0,203.1 416.0,207.3 424.0,211.6 432.0,215.8 440.0,220.0 448.0,224.2 456.0,228.4 464.0,232.6 472.0,236.8 473.0,237.3" fill="none" stroke="#2c5088" stroke-width="0.55" /><polyline points="120.0,55.0 128.0,59.3 136.0,63.6 144.0,68.0 152.0,72.3 160.0,76.7 168.0,81.0 176.0,85.4 184.0,89.7 192.0,94.1 200.0,98.4 208.0,102.6 216.0,106.9 224.0,111.2 232.0,115.4 240.0,119.7 248.0,123.9 256.0,128.1 264.0,132.3 272.0,136.5 280.0,140.7 288.0,144.9 296.0,149.1 304.0,153.3 312.0,157.5 320.0,161.7 328.0,165.8 336.0,170.0 344.0,174.0 352.0,177.8 360.0,181.6 368.0,185.5 376.0,189.4 384.0,193.6 392.0,197.9 400.0,202.1 408.0,206.4 416.0,210.6 424.0,214.8 432.0,219.0 440.0,223.1 448.0,227.3 456.0,231.5 464.0,235.7 472.0,239.9 473.0,240.4" fill="none" stroke="#2c5088" stroke-width="0.55" /><polyline points="120.0,57.4 128.0,61.7 136.0,66.0 144.0,70.4 152.0,74.8 160.0,79.1 168.0,83.5 176.0,87.8 184.0,92.2 192.0,96.5 200.0,100.8 208.0,105.1 216.0,109.3 224.0,113.6 232.0,117.9 240.0,122.1 248.0,126.4 256.0,130.6 264.0,134.8 272.0,139.0 280.0,143.2 288.0,147.4 296.0,151.6 304.0,155.7 312.0,159.9 320.0,164.1 328.0,168.3 336.0,172.5 344.0,176.4 352.0,180.3 360.0,184.1 368.0,187.9 376.0,191.8 384.0,196.1 392.0,200.3 400.0,204.6 408.0,208.8 416.0,213.0 424.0,217.2 432.0,221.3 440.0,225.5 448.0,229.7 456.0,233.9 464.0,238.1 472.0,242.3 473.0,242.8" fill="none" stroke="#2c5088" stroke-width="0.55" /><polyline points="120.0,124.2 128.0,128.6 136.0,132.9 144.0,137.4 152.0,141.8 160.0,146.3 168.0,150.7 176.0,155.2 184.0,159.7 192.0,164.1 200.0,168.5 208.0,172.9 216.0,177.4 224.0,181.8 232.0,186.2 240.0,190.5 248.0,194.8 256.0,199.1 264.0,203.3 272.0,207.5 280.0,211.6 288.0,215.8 296.0,219.9 304.0,224.1 312.0,228.2 320.0,232.4 328.0,236.5 336.0,240.6 344.0,244.6 352.0,248.4 360.0,252.3 368.0,256.1 376.0,260.0 384.0,264.0 392.0,268.1 400.0,272.1 408.0,276.1 416.0,279.9 424.0,283.8 432.0,287.6 440.0,291.4 448.0,295.3 456.0,299.1 464.0,303.0 472.0,306.8 473.0,307.3" fill="none" stroke="#0c8a8a" stroke-width="0.6" /><polyline points="120.0,128.0 128.0,132.4 136.0,136.8 144.0,141.2 152.0,145.7 160.0,150.1 168.0,154.6 176.0,159.1 184.0,163.5 192.0,168.0 200.0,172.4 208.0,176.8 216.0,181.2 224.0,185.7 232.0,190.1 240.0,194.4 248.0,198.7 256.0,203.0 264.0,207.2 272.0,211.4 280.0,215.5 288.0,219.7 296.0,223.8 304.0,228.0 312.0,232.1 320.0,236.3 328.0,240.4 336.0,244.5 344.0,248.5 352.0,252.3 360.0,256.1 368.0,260.0 376.0,263.9 384.0,267.9 392.0,271.9 400.0,276.0 408.0,279.9 416.0,283.7 424.0,287.6 432.0,291.4 440.0,295.2 448.0,299.0 456.0,302.9 464.0,306.7 472.0,310.5 473.0,311.0" fill="none" stroke="#1c7a8a" stroke-width="0.6" /><polyline points="120.0,153.3 128.0,157.7 136.0,162.1 144.0,166.6 152.0,171.1 160.0,175.6 168.0,180.1 176.0,184.6 184.0,189.1 192.0,193.6 200.0,198.0 208.0,202.5 216.0,207.0 224.0,211.5 232.0,215.9 240.0,220.3 248.0,224.6 256.0,229.0 264.0,233.2 272.0,237.3 280.0,241.5 288.0,245.6 296.0,249.7 304.0,253.9 312.0,258.0 320.0,262.1 328.0,266.3 336.0,270.4 344.0,274.2 352.0,278.1 360.0,282.0 368.0,285.8 376.0,289.7 384.0,293.6 392.0,297.6 400.0,301.6 408.0,305.4 416.0,309.1 424.0,312.8 432.0,316.5 440.0,320.2 448.0,323.9 456.0,327.6 464.0,331.3 472.0,335.0 473.0,335.4" fill="none" stroke="#1c7a8a" stroke-width="0.4" /><polyline points="120.0,153.4 128.0,157.7 136.0,162.1 144.0,166.6 152.0,171.1 160.0,175.6 168.0,180.1 176.0,184.6 184.0,189.1 192.0,193.6 200.0,198.1 208.0,202.5 216.0,207.0 224.0,211.5 232.0,216.0 240.0,220.3 248.0,224.7 256.0,229.0 264.0,233.2 272.0,237.3 280.0,241.5 288.0,245.6 296.0,249.8 304.0,253.9 312.0,258.0 320.0,262.2 328.0,266.3 336.0,270.4 344.0,274.3 352.0,278.1 360.0,282.0 368.0,285.8 376.0,289.7 384.0,293.7 392.0,297.6 400.0,301.6 408.0,305.4 416.0,309.1 424.0,312.8 432.0,316.5 440.0,320.2 448.0,323.9 456.0,327.6 464.0,331.3 472.0,335.0 473.0,335.4" fill="none" stroke="#0c8a8a" stroke-width="0.4" /><polyline points="120.0,127.5 128.0,131.8 136.0,136.2 144.0,140.7 152.0,145.1 160.0,149.6 168.0,154.0 176.0,158.5 184.0,163.0 192.0,167.4 200.0,171.8 208.0,176.3 216.0,180.7 224.0,185.1 232.0,189.5 240.0,193.9 248.0,198.2 256.0,202.5 264.0,206.7 272.0,210.8 280.0,215.0 288.0,219.1 296.0,223.3 304.0,227.4 312.0,231.6 320.0,235.7 328.0,239.9 336.0,244.0 344.0,247.9 352.0,251.7 360.0,255.6 368.0,259.4 376.0,263.3 384.0,267.4 392.0,271.4 400.0,275.4 408.0,279.4 416.0,283.2 424.0,287.0 432.0,290.8 440.0,294.7 448.0,298.5 456.0,302.3 464.0,306.2 472.0,310.0 473.0,310.5" fill="none" stroke="#2a5a8c" stroke-width="0.6" /><polyline points="120.0,175.5 128.0,179.9 136.0,184.3 144.0,188.9 152.0,193.4 160.0,197.9 168.0,202.4 176.0,207.0 184.0,211.5 192.0,216.0 200.0,220.5 208.0,225.1 216.0,229.6 224.0,234.1 232.0,238.6 240.0,243.0 248.0,247.4 256.0,251.7 264.0,256.0 272.0,260.1 280.0,264.2 288.0,268.3 296.0,272.5 304.0,276.6 312.0,280.7 320.0,284.8 328.0,288.9 336.0,293.0 344.0,296.9 352.0,300.7 360.0,304.6 368.0,308.5 376.0,312.3 384.0,316.2 392.0,320.1 400.0,324.0 408.0,327.7 416.0,331.3 424.0,334.9 432.0,338.5 440.0,342.1 448.0,345.7 456.0,349.2 464.0,352.8 472.0,356.4 473.0,356.9" fill="none" stroke="#2a5a8c" stroke-width="0.6" /><polyline points="120.0,146.3 128.0,150.7 136.0,155.1 144.0,159.6 152.0,164.1 160.0,168.5 168.0,173.0 176.0,177.5 184.0,182.0 192.0,186.5 200.0,191.0 208.0,195.4 216.0,199.9 224.0,204.3 232.0,208.8 240.0,213.2 248.0,217.5 256.0,221.8 264.0,226.0 272.0,230.2 280.0,234.3 288.0,238.4 296.0,242.6 304.0,246.7 312.0,250.9 320.0,255.0 328.0,259.1 336.0,263.2 344.0,267.1 352.0,271.0 360.0,274.8 368.0,278.7 376.0,282.5 384.0,286.5 392.0,290.5 400.0,294.5 408.0,298.3 416.0,302.1 424.0,305.8 432.0,309.5 440.0,313.3 448.0,317.0 456.0,320.7 464.0,324.5 472.0,328.2 473.0,328.7" fill="none" stroke="#0c8a8a" stroke-width="0.4" /><polyline points="120.0,151.6 128.0,156.0 136.0,160.4 144.0,164.9 152.0,169.4 160.0,173.9 168.0,178.4 176.0,182.8 184.0,187.3 192.0,191.8 200.0,196.3 208.0,200.8 216.0,205.2 224.0,209.7 232.0,214.2 240.0,218.6 248.0,222.9 256.0,227.2 264.0,231.4 272.0,235.6 280.0,239.7 288.0,243.8 296.0,248.0 304.0,252.1 312.0,256.3 320.0,260.4 328.0,264.5 336.0,268.6 344.0,272.5 352.0,276.4 360.0,280.2 368.0,284.1 376.0,287.9 384.0,291.9 392.0,295.9 400.0,299.8 408.0,303.7 416.0,307.4 424.0,311.1 432.0,314.8 440.0,318.5 448.0,322.2 456.0,325.9 464.0,329.6 472.0,333.3 473.0,333.8" fill="none" stroke="#0c8a8a" stroke-width="0.4" /><polyline points="120.0,162.1 128.0,166.4 136.0,170.8 144.0,175.3 152.0,179.8 160.0,184.3 168.0,188.9 176.0,193.4 184.0,197.9 192.0,202.4 200.0,206.9 208.0,211.4 216.0,215.9 224.0,220.3 232.0,224.8 240.0,229.2 248.0,233.6 256.0,237.9 264.0,242.1 272.0,246.3 280.0,250.4 288.0,254.5 296.0,258.6 304.0,262.8 312.0,266.9 320.0,271.0 328.0,275.2 336.0,279.2 344.0,283.1 352.0,287.0 360.0,290.8 368.0,294.7 376.0,298.6 384.0,302.5 392.0,306.4 400.0,310.4 408.0,314.2 416.0,317.8 424.0,321.5 432.0,325.1 440.0,328.8 448.0,332.4 456.0,336.1 464.0,339.7 472.0,343.4 473.0,343.8" fill="none" stroke="#2a5a8c" stroke-width="0.4" /><polyline points="120.0,170.1 128.0,174.5 136.0,178.9 144.0,183.4 152.0,187.9 160.0,192.4 168.0,197.0 176.0,201.5 184.0,206.0 192.0,210.5 200.0,215.0 208.0,219.5 216.0,224.1 224.0,228.6 232.0,233.1 240.0,237.5 248.0,241.8 256.0,246.2 264.0,250.4 272.0,254.5 280.0,258.6 288.0,262.8 296.0,266.9 304.0,271.0 312.0,275.1 320.0,279.3 328.0,283.4 336.0,287.5 344.0,291.3 352.0,295.2 360.0,299.1 368.0,302.9 376.0,306.8 384.0,310.7 392.0,314.6 400.0,318.5 408.0,322.3 416.0,325.9 424.0,329.5 432.0,333.1 440.0,336.7 448.0,340.3 456.0,343.9 464.0,347.5 472.0,351.2 473.0,351.6" fill="none" stroke="#1c7a8a" stroke-width="0.6" /><polyline points="120.0,155.3 128.0,159.6 136.0,164.0 144.0,168.5 152.0,173.0 160.0,177.5 168.0,182.0 176.0,186.5 184.0,191.0 192.0,195.5 200.0,200.0 208.0,204.5 216.0,209.0 224.0,213.4 232.0,217.9 240.0,222.3 248.0,226.6 256.0,230.9 264.0,235.2 272.0,239.3 280.0,243.4 288.0,247.6 296.0,251.7 304.0,255.8 312.0,260.0 320.0,264.1 328.0,268.2 336.0,272.3 344.0,276.2 352.0,280.1 360.0,283.9 368.0,287.8 376.0,291.7 384.0,295.6 392.0,299.6 400.0,303.5 408.0,307.3 416.0,311.0 424.0,314.7 432.0,318.4 440.0,322.1 448.0,325.8 456.0,329.5 464.0,333.1 472.0,336.8 473.0,337.3" fill="none" stroke="#0c8a8a" stroke-width="0.6" /><polyline points="120.0,171.3 128.0,175.7 136.0,180.1 144.0,184.6 152.0,189.1 160.0,193.7 168.0,198.2 176.0,202.7 184.0,207.2 192.0,211.7 200.0,216.3 208.0,220.8 216.0,225.3 224.0,229.8 232.0,234.3 240.0,238.7 248.0,243.1 256.0,247.4 264.0,251.6 272.0,255.8 280.0,259.9 288.0,264.0 296.0,268.1 304.0,272.3 312.0,276.4 320.0,280.5 328.0,284.6 336.0,288.7 344.0,292.6 352.0,296.4 360.0,300.3 368.0,304.2 376.0,308.0 384.0,311.9 392.0,315.8 400.0,319.7 408.0,323.5 416.0,327.1 424.0,330.7 432.0,334.3 440.0,337.9 448.0,341.5 456.0,345.1 464.0,348.7 472.0,352.3 473.0,352.8" fill="none" stroke="#2a5a8c" stroke-width="0.6" /><polyline points="120.0,176.4 128.0,180.8 136.0,185.2 144.0,189.8 152.0,194.3 160.0,198.8 168.0,203.3 176.0,207.9 184.0,212.4 192.0,216.9 200.0,221.5 208.0,226.0 216.0,230.5 224.0,235.0 232.0,239.6 240.0,244.0 248.0,248.3 256.0,252.7 264.0,256.9 272.0,261.0 280.0,265.1 288.0,269.3 296.0,273.4 304.0,277.5 312.0,281.6 320.0,285.7 328.0,289.9 336.0,293.9 344.0,297.8 352.0,301.7 360.0,305.5 368.0,309.4 376.0,313.3 384.0,317.1 392.0,321.0 400.0,324.9 408.0,328.7 416.0,332.2 424.0,335.8 432.0,339.4 440.0,343.0 448.0,346.5 456.0,350.1 464.0,353.7 472.0,357.3 473.0,357.7" fill="none" stroke="#2a5a8c" stroke-width="0.6" /><polyline points="120.0,181.7 128.0,186.1 136.0,190.5 144.0,195.0 152.0,199.6 160.0,204.1 168.0,208.6 176.0,213.2 184.0,217.7 192.0,222.2 200.0,226.8 208.0,231.3 216.0,235.8 224.0,240.4 232.0,244.9 240.0,249.3 248.0,253.7 256.0,258.0 264.0,262.3 272.0,266.4 280.0,270.5 288.0,274.6 296.0,278.8 304.0,282.9 312.0,287.0 320.0,291.1 328.0,295.2 336.0,299.3 344.0,303.2 352.0,307.0 360.0,310.9 368.0,314.7 376.0,318.6 384.0,322.5 392.0,326.4 400.0,330.2 408.0,333.9 416.0,337.5 424.0,341.0 432.0,344.6 440.0,348.2 448.0,351.7 456.0,355.3 464.0,358.8 472.0,362.4 473.0,362.8" fill="none" stroke="#2a5a8c" stroke-width="0.4" /><polyline points="250.0,95.7 258.0,99.9 266.0,104.1 274.0,108.3 282.0,112.5 290.0,116.7 298.0,120.9 306.0,125.1 314.0,129.3 322.0,133.5 330.0,137.7 338.0,141.9 346.0,145.8 354.0,149.6 362.0,153.5 370.0,157.3 378.0,161.3 386.0,165.7 394.0,170.0 402.0,174.3 410.0,178.7 418.0,183.0 426.0,187.4 434.0,191.7 442.0,196.0 450.0,200.4 458.0,204.7 466.0,209.1 473.0,212.9" fill="none" stroke="#8a0a8a" stroke-width="1.3" /><polyline points="250.0,103.9 258.0,108.1 266.0,112.3 274.0,116.5 282.0,120.7 290.0,124.9 298.0,129.1 306.0,133.3 314.0,137.5 322.0,141.7 330.0,145.9 338.0,150.1 346.0,154.0 354.0,157.8 362.0,161.6 370.0,165.5 378.0,169.5 386.0,173.8 394.0,178.1 402.0,182.4 410.0,186.8 418.0,191.1 426.0,195.4 434.0,199.7 442.0,204.0 450.0,208.2 458.0,212.5 466.0,216.8 473.0,220.6" fill="none" stroke="#8a0a8a" stroke-width="1.3" /><polyline points="250.0,112.1 258.0,116.4 266.0,120.6 274.0,124.8 282.0,128.9 290.0,133.1 298.0,137.3 306.0,141.5 314.0,145.7 322.0,149.9 330.0,154.1 338.0,158.3 346.0,162.2 354.0,166.0 362.0,169.8 370.0,173.6 378.0,177.7 386.0,182.0 394.0,186.3 402.0,190.6 410.0,194.8 418.0,199.1 426.0,203.3 434.0,207.6 442.0,211.9 450.0,216.1 458.0,220.4 466.0,224.6 473.0,228.4" fill="none" stroke="#8a0a8a" stroke-width="1.5" /><polyline points="250.0,123.3 258.0,127.6 266.0,131.7 274.0,135.9 282.0,140.1 290.0,144.3 298.0,148.5 306.0,152.7 314.0,156.9 322.0,161.1 330.0,165.2 338.0,169.4 346.0,173.3 354.0,177.1 362.0,181.0 370.0,184.8 378.0,188.8 386.0,193.1 394.0,197.3 402.0,201.6 410.0,205.8 418.0,210.0 426.0,214.2 434.0,218.4 442.0,222.6 450.0,226.8 458.0,231.0 466.0,235.2 473.0,238.9" fill="none" stroke="#8a0a8a" stroke-width="1.6" /><polyline points="250.0,134.2 258.0,138.4 266.0,142.6 274.0,146.8 282.0,151.0 290.0,155.2 298.0,159.3 306.0,163.5 314.0,167.7 322.0,171.9 330.0,176.1 338.0,180.2 346.0,184.1 354.0,187.9 362.0,191.8 370.0,195.6 378.0,199.6 386.0,203.8 394.0,208.1 402.0,212.3 410.0,216.5 418.0,220.6 426.0,224.8 434.0,228.9 442.0,233.1 450.0,237.2 458.0,241.3 466.0,245.5 473.0,249.1" fill="none" stroke="#8a0a8a" stroke-width="1.5" /><polyline points="131.0,72.5 207.5,106.5" fill="none" stroke="#8a0a8a" stroke-width="2.4" /><polyline points="193.3,85.2 301.0,134.8" fill="none" stroke="#8a0a8a" stroke-width="1.8" /><polyline points="211.0,109.0 245.0,125.0" fill="none" stroke="#8a0a8a" stroke-width="1.0" /></g><g clip-path="url(#bc)"><polyline points="120.0,125.6 128.0,130.0 136.0,134.3 144.0,138.8 152.0,143.3 160.0,147.7 168.0,152.2 176.0,156.6 184.0,161.1 192.0,165.5 200.0,169.9 208.0,174.4 216.0,178.8 224.0,183.2 232.0,187.6 240.0,191.9 248.0,196.2 256.0,200.5 260.0,202.7" fill="none" stroke="#ff00ff" stroke-width="3.2" /><polyline points="120.0,138.5 128.0,142.8 136.0,147.2 144.0,151.7 152.0,156.1 160.0,160.6 168.0,165.1 176.0,169.6 184.0,174.0 192.0,178.5 200.0,183.0 208.0,187.4 216.0,191.8 224.0,196.3 232.0,200.7 240.0,205.1 248.0,209.4 256.0,213.7 260.0,215.9" fill="none" stroke="#ff00ff" stroke-width="3.6" /><polyline points="120.0,151.3 128.0,155.6 136.0,160.1 144.0,164.5 152.0,169.0 160.0,173.5 168.0,178.0 176.0,182.5 184.0,187.0 192.0,191.5 200.0,196.0 208.0,200.4 216.0,204.9 224.0,209.4 232.0,213.9 240.0,218.2 248.0,222.5 256.0,226.9 260.0,229.0" fill="none" stroke="#ff00ff" stroke-width="3.0" /><polyline points="120.0,162.5 128.0,166.9 136.0,171.3 144.0,175.8 152.0,180.3 160.0,184.8 168.0,189.3 176.0,193.8 184.0,198.4 192.0,202.9 200.0,207.4 208.0,211.9 216.0,216.3 224.0,220.8 232.0,225.3 240.0,229.7 248.0,234.1 256.0,238.4 260.0,240.6" fill="none" stroke="#ff00ff" stroke-width="2.6" /><polyline points="120.0,172.2 128.0,176.5 136.0,180.9 144.0,185.5 152.0,190.0 160.0,194.5 168.0,199.0 176.0,203.6 184.0,208.1 192.0,212.6 200.0,217.1 208.0,221.6 216.0,226.1 224.0,230.7 232.0,235.2 240.0,239.6 248.0,243.9 256.0,248.3 260.0,250.4" fill="none" stroke="#ff00ff" stroke-width="2.0" /><polyline points="120.0,178.6 128.0,182.9 136.0,187.4 144.0,191.9 152.0,196.4 160.0,201.0 168.0,205.5 176.0,210.0 184.0,214.6 192.0,219.1 200.0,223.6 208.0,228.2 216.0,232.7 224.0,237.2 232.0,241.7 240.0,246.1 248.0,250.5 256.0,254.8 260.0,257.0" fill="none" stroke="#ff00ff" stroke-width="1.4" /><polyline points="300.0,218.5 308.0,222.7 316.0,226.8 324.0,231.0 332.0,235.1 340.0,239.2 348.0,243.0 356.0,246.8 364.0,250.7 372.0,254.5 380.0,258.5 388.0,262.6 396.0,266.6 404.0,270.7 412.0,274.6 420.0,278.4 428.0,282.3 436.0,286.1 444.0,290.0 452.0,293.9 460.0,297.7 468.0,301.6 473.0,304.0" fill="none" stroke="#ff00ff" stroke-width="2.8" /><polyline points="300.0,227.5 308.0,231.7 316.0,235.8 324.0,240.0 332.0,244.1 340.0,248.2 348.0,252.0 356.0,255.8 364.0,259.7 372.0,263.5 380.0,267.5 388.0,271.5 396.0,275.6 404.0,279.6 412.0,283.4 420.0,287.2 428.0,291.1 436.0,294.9 444.0,298.7 452.0,302.5 460.0,306.3 468.0,310.1 473.0,312.5" fill="none" stroke="#ff00ff" stroke-width="4.2" /><polyline points="300.0,236.6 308.0,240.7 316.0,244.9 324.0,249.0 332.0,253.1 340.0,257.2 348.0,261.0 356.0,264.9 364.0,268.7 372.0,272.5 380.0,276.5 388.0,280.5 396.0,284.5 404.0,288.5 412.0,292.3 420.0,296.1 428.0,299.8 436.0,303.6 444.0,307.4 452.0,311.1 460.0,314.9 468.0,318.7 473.0,321.1" fill="none" stroke="#ff00ff" stroke-width="2.6" /><polyline points="300.0,244.8 308.0,248.9 316.0,253.1 324.0,257.2 332.0,261.3 340.0,265.3 348.0,269.2 356.0,273.0 364.0,276.9 372.0,280.7 380.0,284.7 388.0,288.7 396.0,292.6 404.0,296.6 412.0,300.3 420.0,304.1 428.0,307.8 436.0,311.5 444.0,315.3 452.0,319.0 460.0,322.7 468.0,326.5 473.0,328.8" fill="none" stroke="#ff00ff" stroke-width="3.4" /><polyline points="300.0,253.0 308.0,257.1 316.0,261.3 324.0,265.4 332.0,269.5 340.0,273.5 348.0,277.4 356.0,281.2 364.0,285.1 372.0,288.9 380.0,292.9 388.0,296.8 396.0,300.8 404.0,304.7 412.0,308.4 420.0,312.1 428.0,315.8 436.0,319.5 444.0,323.2 452.0,326.9 460.0,330.6 468.0,334.2 473.0,336.6" fill="none" stroke="#ff00ff" stroke-width="2.2" /><polyline points="300.0,259.6 308.0,263.7 316.0,267.8 324.0,272.0 332.0,276.1 340.0,280.1 348.0,283.9 356.0,287.8 364.0,291.6 372.0,295.5 380.0,299.4 388.0,303.3 396.0,307.3 404.0,311.2 412.0,314.9 420.0,318.5 428.0,322.2 436.0,325.8 444.0,329.5 452.0,333.1 460.0,336.8 468.0,340.5 473.0,342.8" fill="none" stroke="#ff00ff" stroke-width="2.6" /><polyline points="300.0,266.1 308.0,270.3 316.0,274.4 324.0,278.5 332.0,282.6 340.0,286.6 348.0,290.5 356.0,294.3 364.0,298.2 372.0,302.0 380.0,305.9 388.0,309.8 396.0,313.8 404.0,317.7 412.0,321.3 420.0,324.9 428.0,328.6 436.0,332.2 444.0,335.8 452.0,339.4 460.0,343.1 468.0,346.7 473.0,348.9" fill="none" stroke="#ff00ff" stroke-width="1.8" /><polyline points="300.0,271.9 308.0,276.0 316.0,280.1 324.0,284.3 332.0,288.4 340.0,292.3 348.0,296.2 356.0,300.0 364.0,303.9 372.0,307.8 380.0,311.7 388.0,315.6 396.0,319.4 404.0,323.3 412.0,326.9 420.0,330.5 428.0,334.1 436.0,337.7 444.0,341.3 452.0,344.9 460.0,348.5 468.0,352.1 473.0,354.4" fill="none" stroke="#ff00ff" stroke-width="1.8" /><polyline points="300.0,276.8 308.0,280.9 316.0,285.1 324.0,289.2 332.0,293.3 340.0,297.2 348.0,301.1 356.0,305.0 364.0,308.8 372.0,312.7 380.0,316.6 388.0,320.4 396.0,324.3 404.0,328.2 412.0,331.8 420.0,335.4 428.0,338.9 436.0,342.5 444.0,346.1 452.0,349.6 460.0,353.2 468.0,356.8 473.0,359.0" fill="none" stroke="#ff00ff" stroke-width="1.2" /><polyline points="330.0,240.6 338.0,244.7 346.0,248.6 354.0,252.4 362.0,256.3 370.0,260.1 378.0,264.1 386.0,268.1 394.0,272.1 402.0,276.2 410.0,280.0 418.0,283.9 426.0,287.7 434.0,291.5 442.0,295.4 450.0,299.2 458.0,303.0 466.0,306.8 473.0,310.2" fill="none" stroke="#1a8a9a" stroke-width="0.7" /><polyline points="330.0,248.8 338.0,252.9 346.0,256.8 354.0,260.6 362.0,264.5 370.0,268.3 378.0,272.2 386.0,276.2 394.0,280.3 402.0,284.3 410.0,288.1 418.0,291.9 426.0,295.7 434.0,299.5 442.0,303.3 450.0,307.1 458.0,310.8 466.0,314.6 473.0,317.9" fill="none" stroke="#1a8a9a" stroke-width="0.7" /><polyline points="330.0,257.8 338.0,261.9 346.0,265.8 354.0,269.6 362.0,273.5 370.0,277.3 378.0,281.2 386.0,285.2 394.0,289.2 402.0,293.2 410.0,297.0 418.0,300.7 426.0,304.5 434.0,308.2 442.0,312.0 450.0,315.7 458.0,319.5 466.0,323.2 473.0,326.5" fill="none" stroke="#1a8a9a" stroke-width="0.7" /><polyline points="330.0,266.0 338.0,270.1 346.0,273.9 354.0,277.8 362.0,281.7 370.0,285.5 378.0,289.4 386.0,293.4 394.0,297.3 402.0,301.3 410.0,305.1 418.0,308.8 426.0,312.5 434.0,316.2 442.0,319.9 450.0,323.6 458.0,327.3 466.0,331.0 473.0,334.2" fill="none" stroke="#1a8a9a" stroke-width="0.7" /><polyline points="330.0,273.4 338.0,277.4 346.0,281.3 354.0,285.2 362.0,289.0 370.0,292.9 378.0,296.8 386.0,300.7 394.0,304.7 402.0,308.6 410.0,312.3 418.0,316.0 426.0,319.7 434.0,323.3 442.0,327.0 450.0,330.7 458.0,334.3 466.0,338.0 473.0,341.2" fill="none" stroke="#1a8a9a" stroke-width="0.7" /><polyline points="330.0,280.0 338.0,284.0 346.0,287.9 354.0,291.7 362.0,295.6 370.0,299.4 378.0,303.3 386.0,307.2 394.0,311.2 402.0,315.1 410.0,318.8 418.0,322.4 426.0,326.1 434.0,329.7 442.0,333.3 450.0,337.0 458.0,340.6 466.0,344.2 473.0,347.4" fill="none" stroke="#1a8a9a" stroke-width="0.7" /><polyline points="330.0,285.7 338.0,289.7 346.0,293.6 354.0,297.4 362.0,301.3 370.0,305.2 378.0,309.0 386.0,312.9 394.0,316.8 402.0,320.8 410.0,324.4 418.0,328.0 426.0,331.6 434.0,335.2 442.0,338.9 450.0,342.5 458.0,346.1 466.0,349.7 473.0,352.8" fill="none" stroke="#1a8a9a" stroke-width="0.7" /><polyline points="330.0,291.4 338.0,295.4 346.0,299.3 354.0,303.2 362.0,307.0 370.0,310.9 378.0,314.8 386.0,318.7 394.0,322.5 402.0,326.4 410.0,330.1 418.0,333.7 426.0,337.2 434.0,340.8 442.0,344.4 450.0,348.0 458.0,351.5 466.0,355.1 473.0,358.2" fill="none" stroke="#1a8a9a" stroke-width="0.7" /><polyline points="330.0,294.7 338.0,298.7 346.0,302.6 354.0,306.4 362.0,310.3 370.0,314.2 378.0,318.0 386.0,321.9 394.0,325.8 402.0,329.7 410.0,333.3 418.0,336.9 426.0,340.4 434.0,344.0 442.0,347.6 450.0,351.1 458.0,354.7 466.0,358.2 473.0,361.4" fill="none" stroke="#1a8a9a" stroke-width="0.7" /><polyline points="330.0,297.2 338.0,301.2 346.0,305.0 354.0,308.9 362.0,312.8 370.0,316.6 378.0,320.5 386.0,324.4 394.0,328.2 402.0,332.1 410.0,335.7 418.0,339.3 426.0,342.8 434.0,346.4 442.0,349.9 450.0,353.5 458.0,357.0 466.0,360.6 473.0,363.7" fill="none" stroke="#1a8a9a" stroke-width="0.7" /><polygon points="180.0,143.0 271.0,188.0 271.0,193.5 180.0,148.5" fill="#ff00ff" /><polygon points="180.0,151.5 271.0,196.5 271.0,200.0 180.0,155.0" fill="#ff00ff" /><polygon points="156.6,164.9 244.0,207.3 244.0,222.0 156.6,181.5" fill="#ff00ff" /><polygon points="244.0,207.3 244.0,222.0 262.0,200.0 264.0,196.0" fill="#990000" /><polygon points="238.8,187.2 262.8,174.2 249.6,189.4 238.8,196.2" fill="#990000" /><polygon points="252.4,194.0 276.4,181.0 263.2,196.2 252.4,203.0" fill="#990000" /><polygon points="266.0,200.8 290.0,187.8 276.8,203.1 266.0,209.8" fill="#990000" /><polygon points="279.6,207.6 303.6,194.6 290.4,209.9 279.6,216.6" fill="#990000" /><polygon points="293.2,214.4 317.2,201.4 304.0,216.6 293.2,223.4" fill="#990000" /><polygon points="306.8,221.2 330.8,208.2 317.6,223.4 306.8,230.2" fill="#990000" /><polygon points="320.4,228.0 344.4,215.0 331.2,230.2 320.4,237.0" fill="#990000" /><polygon points="334.0,234.8 358.0,221.8 344.8,237.1 334.0,243.8" fill="#990000" /><polygon points="347.6,241.6 371.6,228.6 358.4,243.9 347.6,250.6" fill="#990000" /><polygon points="361.2,248.4 385.2,235.4 372.0,250.6 361.2,257.4" fill="#990000" /><polygon points="374.8,255.2 398.8,242.2 385.6,257.4 374.8,264.2" fill="#990000" /><polygon points="388.4,262.0 412.4,249.0 399.2,264.2 388.4,271.0" fill="#990000" /><polygon points="402.0,268.8 426.0,255.8 412.8,271.1 402.0,277.8" fill="#990000" /><polygon points="415.6,275.6 439.6,262.6 426.4,277.9 415.6,284.6" fill="#990000" /><polygon points="429.2,282.4 453.2,269.4 440.0,284.6 429.2,291.4" fill="#990000" /><polygon points="230.4,184.0 238.8,188.2 238.8,196.2 230.4,192.0" fill="#ff00ff" /><polygon points="244.0,190.8 252.4,195.0 252.4,203.0 244.0,198.8" fill="#ff00ff" /><polygon points="257.6,197.6 266.0,201.8 266.0,209.8 257.6,205.6" fill="#ff00ff" /><polygon points="271.2,204.4 279.6,208.6 279.6,216.6 271.2,212.4" fill="#ff00ff" /><polygon points="284.8,211.2 293.2,215.4 293.2,223.4 284.8,219.2" fill="#ff00ff" /><polygon points="298.4,218.0 306.8,222.2 306.8,230.2 298.4,226.0" fill="#ff00ff" /><polygon points="312.0,224.8 320.4,229.0 320.4,237.0 312.0,232.8" fill="#ff00ff" /><polygon points="325.6,231.6 334.0,235.8 334.0,243.8 325.6,239.6" fill="#ff00ff" /><polygon points="339.2,238.4 347.6,242.6 347.6,250.6 339.2,246.4" fill="#ff00ff" /><polygon points="352.8,245.2 361.2,249.4 361.2,257.4 352.8,253.2" fill="#ff00ff" /><polygon points="366.4,252.0 374.8,256.2 374.8,264.2 366.4,260.0" fill="#ff00ff" /><polygon points="380.0,258.8 388.4,263.0 388.4,271.0 380.0,266.8" fill="#ff00ff" /><polygon points="393.6,265.6 402.0,269.8 402.0,277.8 393.6,273.6" fill="#ff00ff" /><polygon points="407.2,272.4 415.6,276.6 415.6,284.6 407.2,280.4" fill="#ff00ff" /><polygon points="420.8,279.2 429.2,283.4 429.2,291.4 420.8,287.2" fill="#ff00ff" /><polygon points="232.0,207.8 270.0,186.8 249.1,209.6 232.0,220.3" fill="#990000" /><polygon points="245.6,214.6 283.6,193.6 262.7,216.4 245.6,227.1" fill="#990000" /><polygon points="259.2,221.4 297.2,200.4 276.3,223.2 259.2,233.9" fill="#990000" /><polygon points="272.8,228.2 310.8,207.2 289.9,230.0 272.8,240.7" fill="#990000" /><polygon points="286.4,235.0 324.4,214.0 303.5,236.8 286.4,247.5" fill="#990000" /><polygon points="300.0,241.8 338.0,220.8 317.1,243.6 300.0,254.3" fill="#990000" /><polygon points="313.6,248.6 351.6,227.6 330.7,250.4 313.6,261.1" fill="#990000" /><polygon points="327.2,255.4 365.2,234.4 344.3,257.2 327.2,267.9" fill="#990000" /><polygon points="340.8,262.2 378.8,241.2 357.9,264.0 340.8,274.7" fill="#990000" /><polygon points="354.4,269.0 392.4,248.0 371.5,270.8 354.4,281.5" fill="#990000" /><polygon points="368.0,275.8 406.0,254.8 385.1,277.6 368.0,288.3" fill="#990000" /><polygon points="381.6,282.6 419.6,261.6 398.7,284.4 381.6,295.1" fill="#990000" /><polygon points="395.2,289.4 433.2,268.4 412.3,291.2 395.2,301.9" fill="#990000" /><polygon points="408.8,296.2 446.8,275.2 425.9,298.0 408.8,308.7" fill="#990000" /><polygon points="223.6,204.6 232.0,208.8 232.0,220.3 223.6,216.1" fill="#ff00ff" /><polygon points="237.2,211.4 245.6,215.6 245.6,227.1 237.2,222.9" fill="#ff00ff" /><polygon points="250.8,218.2 259.2,222.4 259.2,233.9 250.8,229.7" fill="#ff00ff" /><polygon points="264.4,225.0 272.8,229.2 272.8,240.7 264.4,236.5" fill="#ff00ff" /><polygon points="278.0,231.8 286.4,236.0 286.4,247.5 278.0,243.3" fill="#ff00ff" /><polygon points="291.6,238.6 300.0,242.8 300.0,254.3 291.6,250.1" fill="#ff00ff" /><polygon points="305.2,245.4 313.6,249.6 313.6,261.1 305.2,256.9" fill="#ff00ff" /><polygon points="318.8,252.2 327.2,256.4 327.2,267.9 318.8,263.7" fill="#ff00ff" /><polygon points="332.4,259.0 340.8,263.2 340.8,274.7 332.4,270.5" fill="#ff00ff" /><polygon points="346.0,265.8 354.4,270.0 354.4,281.5 346.0,277.3" fill="#ff00ff" /><polygon points="359.6,272.6 368.0,276.8 368.0,288.3 359.6,284.1" fill="#ff00ff" /><polygon points="373.2,279.4 381.6,283.6 381.6,295.1 373.2,290.9" fill="#ff00ff" /><polygon points="386.8,286.2 395.2,290.4 395.2,301.9 386.8,297.7" fill="#ff00ff" /><polygon points="400.4,293.0 408.8,297.2 408.8,308.7 400.4,304.5" fill="#ff00ff" /><polygon points="211.6,216.6 225.6,207.6 225.6,216.6 211.6,225.6" fill="#990000" /><polygon points="225.2,222.8 239.2,213.8 239.2,222.8 225.2,231.8" fill="#990000" /><polygon points="238.8,228.9 252.8,219.9 252.8,228.9 238.8,237.9" fill="#990000" /><polygon points="252.4,235.0 266.4,226.0 266.4,235.0 252.4,244.0" fill="#990000" /><polygon points="266.0,241.1 280.0,232.1 280.0,241.1 266.0,250.1" fill="#990000" /><polygon points="279.6,247.2 293.6,238.2 293.6,247.2 279.6,256.2" fill="#990000" /><polygon points="293.2,253.4 307.2,244.4 307.2,253.4 293.2,262.4" fill="#990000" /><polygon points="306.8,259.5 320.8,250.5 320.8,259.5 306.8,268.5" fill="#990000" /><polygon points="320.4,265.6 334.4,256.6 334.4,265.6 320.4,274.6" fill="#990000" /><polygon points="334.0,271.7 348.0,262.7 348.0,271.7 334.0,280.7" fill="#990000" /><polygon points="347.6,277.8 361.6,268.8 361.6,277.8 347.6,286.8" fill="#990000" /><polygon points="361.2,284.0 375.2,275.0 375.2,284.0 361.2,293.0" fill="#990000" /><polygon points="374.8,290.1 388.8,281.1 388.8,290.1 374.8,299.1" fill="#990000" /><polygon points="388.4,296.2 402.4,287.2 402.4,296.2 388.4,305.2" fill="#990000" /><polygon points="402.0,302.3 416.0,293.3 416.0,302.3 402.0,311.3" fill="#990000" /><polygon points="203.2,213.8 211.6,217.6 211.6,225.6 203.2,221.8" fill="#ff00ff" /><polygon points="216.8,220.0 225.2,223.8 225.2,231.8 216.8,228.0" fill="#ff00ff" /><polygon points="230.4,226.1 238.8,229.9 238.8,237.9 230.4,234.1" fill="#ff00ff" /><polygon points="244.0,232.2 252.4,236.0 252.4,244.0 244.0,240.2" fill="#ff00ff" /><polygon points="257.6,238.3 266.0,242.1 266.0,250.1 257.6,246.3" fill="#ff00ff" /><polygon points="271.2,244.4 279.6,248.2 279.6,256.2 271.2,252.4" fill="#ff00ff" /><polygon points="284.8,250.6 293.2,254.4 293.2,262.4 284.8,258.6" fill="#ff00ff" /><polygon points="298.4,256.7 306.8,260.5 306.8,268.5 298.4,264.7" fill="#ff00ff" /><polygon points="312.0,262.8 320.4,266.6 320.4,274.6 312.0,270.8" fill="#ff00ff" /><polygon points="325.6,268.9 334.0,272.7 334.0,280.7 325.6,276.9" fill="#ff00ff" /><polygon points="339.2,275.0 347.6,278.8 347.6,286.8 339.2,283.0" fill="#ff00ff" /><polygon points="352.8,281.2 361.2,285.0 361.2,293.0 352.8,289.2" fill="#ff00ff" /><polygon points="366.4,287.3 374.8,291.1 374.8,299.1 366.4,295.3" fill="#ff00ff" /><polygon points="380.0,293.4 388.4,297.2 388.4,305.2 380.0,301.4" fill="#ff00ff" /><polygon points="393.6,299.5 402.0,303.3 402.0,311.3 393.6,307.5" fill="#ff00ff" /><polygon points="191.2,222.5 204.2,214.5 204.2,222.5 191.2,230.5" fill="#990000" /><polygon points="204.8,228.6 217.8,220.6 217.8,228.6 204.8,236.6" fill="#990000" /><polygon points="218.4,234.7 231.4,226.7 231.4,234.7 218.4,242.7" fill="#990000" /><polygon points="232.0,240.8 245.0,232.8 245.0,240.8 232.0,248.8" fill="#990000" /><polygon points="245.6,246.9 258.6,238.9 258.6,246.9 245.6,254.9" fill="#990000" /><polygon points="259.2,253.1 272.2,245.1 272.2,253.1 259.2,261.1" fill="#990000" /><polygon points="272.8,259.2 285.8,251.2 285.8,259.2 272.8,267.2" fill="#990000" /><polygon points="286.4,265.3 299.4,257.3 299.4,265.3 286.4,273.3" fill="#990000" /><polygon points="300.0,271.4 313.0,263.4 313.0,271.4 300.0,279.4" fill="#990000" /><polygon points="313.6,277.5 326.6,269.5 326.6,277.5 313.6,285.5" fill="#990000" /><polygon points="327.2,283.7 340.2,275.7 340.2,283.7 327.2,291.7" fill="#990000" /><polygon points="340.8,289.8 353.8,281.8 353.8,289.8 340.8,297.8" fill="#990000" /><polygon points="354.4,295.9 367.4,287.9 367.4,295.9 354.4,303.9" fill="#990000" /><polygon points="368.0,302.0 381.0,294.0 381.0,302.0 368.0,310.0" fill="#990000" /><polygon points="381.6,308.1 394.6,300.1 394.6,308.1 381.6,316.1" fill="#990000" /><polygon points="182.8,219.7 191.2,223.5 191.2,230.5 182.8,226.7" fill="#ff00ff" /><polygon points="196.4,225.8 204.8,229.6 204.8,236.6 196.4,232.8" fill="#ff00ff" /><polygon points="210.0,231.9 218.4,235.7 218.4,242.7 210.0,238.9" fill="#ff00ff" /><polygon points="223.6,238.0 232.0,241.8 232.0,248.8 223.6,245.0" fill="#ff00ff" /><polygon points="237.2,244.1 245.6,247.9 245.6,254.9 237.2,251.1" fill="#ff00ff" /><polygon points="250.8,250.3 259.2,254.1 259.2,261.1 250.8,257.3" fill="#ff00ff" /><polygon points="264.4,256.4 272.8,260.2 272.8,267.2 264.4,263.4" fill="#ff00ff" /><polygon points="278.0,262.5 286.4,266.3 286.4,273.3 278.0,269.5" fill="#ff00ff" /><polygon points="291.6,268.6 300.0,272.4 300.0,279.4 291.6,275.6" fill="#ff00ff" /><polygon points="305.2,274.7 313.6,278.5 313.6,285.5 305.2,281.7" fill="#ff00ff" /><polygon points="318.8,280.9 327.2,284.7 327.2,291.7 318.8,287.9" fill="#ff00ff" /><polygon points="332.4,287.0 340.8,290.8 340.8,297.8 332.4,294.0" fill="#ff00ff" /><polygon points="346.0,293.1 354.4,296.9 354.4,303.9 346.0,300.1" fill="#ff00ff" /><polygon points="359.6,299.2 368.0,303.0 368.0,310.0 359.6,306.2" fill="#ff00ff" /><polygon points="373.2,305.3 381.6,309.1 381.6,316.1 373.2,312.3" fill="#ff00ff" /><polygon points="361.2,313.0 373.2,306.0 373.2,313.0 361.2,320.0" fill="#990000" /><polygon points="352.8,310.2 361.2,314.0 361.2,320.0 352.8,316.2" fill="#ff00ff" /><clipPath id="lowc"><polygon points="245.0,200.0 452.0,303.0 473.0,366.0 175.0,222.0 245.0,232.0"/></clipPath><g clip-path="url(#lowc)"><polyline points="150.0,156.6 158.0,161.1 166.0,165.6 174.0,170.1 182.0,174.5 190.0,179.0 198.0,183.5 206.0,187.9 214.0,192.4 222.0,196.8 230.0,201.3 238.0,205.7 246.0,210.0 254.0,214.3 262.0,218.5 270.0,222.7 278.0,226.8 286.0,231.0 294.0,235.1 302.0,239.3 310.0,243.4 318.0,247.5 326.0,251.7 334.0,255.8 342.0,259.8 350.0,263.6 358.0,267.5 366.0,271.3 374.0,275.2 382.0,279.1 390.0,283.1 398.0,287.1 406.0,291.1 414.0,294.8 422.0,298.6 430.0,302.4 438.0,306.1 446.0,309.9 454.0,313.7 462.0,317.4 470.0,321.2 473.0,322.6" fill="none" stroke="#5a1a6a" stroke-width="0.6" /><polyline points="150.0,159.9 158.0,164.3 166.0,168.8 174.0,173.3 182.0,177.8 190.0,182.3 198.0,186.7 206.0,191.2 214.0,195.6 222.0,200.1 230.0,204.5 238.0,208.9 246.0,213.2 254.0,217.6 262.0,221.8 270.0,226.0 278.0,230.1 286.0,234.3 294.0,238.4 302.0,242.5 310.0,246.7 318.0,250.8 326.0,255.0 334.0,259.1 342.0,263.0 350.0,266.9 358.0,270.7 366.0,274.6 374.0,278.4 382.0,282.4 390.0,286.4 398.0,290.4 406.0,294.3 414.0,298.1 422.0,301.8 430.0,305.6 438.0,309.3 446.0,313.1 454.0,316.8 462.0,320.5 470.0,324.3 473.0,325.7" fill="none" stroke="#5a1a6a" stroke-width="0.6" /><polyline points="150.0,163.1 158.0,167.6 166.0,172.1 174.0,176.5 182.0,181.0 190.0,185.5 198.0,190.0 206.0,194.4 214.0,198.9 222.0,203.4 230.0,207.8 238.0,212.2 246.0,216.5 254.0,220.9 262.0,225.1 270.0,229.3 278.0,233.4 286.0,237.5 294.0,241.7 302.0,245.8 310.0,250.0 318.0,254.1 326.0,258.2 334.0,262.4 342.0,266.3 350.0,270.1 358.0,274.0 366.0,277.9 374.0,281.7 382.0,285.7 390.0,289.7 398.0,293.6 406.0,297.5 414.0,301.3 422.0,305.0 430.0,308.7 438.0,312.5 446.0,316.2 454.0,319.9 462.0,323.7 470.0,327.4 473.0,328.8" fill="none" stroke="#5a1a6a" stroke-width="0.6" /><polyline points="150.0,167.9 158.0,172.4 166.0,176.9 174.0,181.4 182.0,185.9 190.0,190.4 198.0,194.9 206.0,199.3 214.0,203.8 222.0,208.3 230.0,212.7 238.0,217.1 246.0,221.5 254.0,225.8 262.0,230.1 270.0,234.2 278.0,238.3 286.0,242.5 294.0,246.6 302.0,250.7 310.0,254.9 318.0,259.0 326.0,263.2 334.0,267.3 342.0,271.2 350.0,275.1 358.0,278.9 366.0,282.8 374.0,286.6 382.0,290.6 390.0,294.5 398.0,298.5 406.0,302.4 414.0,306.1 422.0,309.8 430.0,313.5 438.0,317.2 446.0,320.9 454.0,324.6 462.0,328.4 470.0,332.1 473.0,333.4" fill="none" stroke="#5a1a6a" stroke-width="0.6" /><polyline points="150.0,171.1 158.0,175.6 166.0,180.1 174.0,184.6 182.0,189.1 190.0,193.6 198.0,198.1 206.0,202.6 214.0,207.1 222.0,211.5 230.0,216.0 238.0,220.4 246.0,224.8 254.0,229.1 262.0,233.4 270.0,237.5 278.0,241.6 286.0,245.8 294.0,249.9 302.0,254.0 310.0,258.2 318.0,262.3 326.0,266.4 334.0,270.6 342.0,274.5 350.0,278.3 358.0,282.2 366.0,286.0 374.0,289.9 382.0,293.8 390.0,297.8 398.0,301.8 406.0,305.6 414.0,309.3 422.0,313.0 430.0,316.7 438.0,320.4 446.0,324.1 454.0,327.8 462.0,331.5 470.0,335.2 473.0,336.6" fill="none" stroke="#5a1a6a" stroke-width="0.6" /><polyline points="150.0,174.4 158.0,178.9 166.0,183.4 174.0,187.9 182.0,192.4 190.0,196.9 198.0,201.4 206.0,205.8 214.0,210.3 222.0,214.8 230.0,219.3 238.0,223.7 246.0,228.0 254.0,232.4 262.0,236.6 270.0,240.8 278.0,244.9 286.0,249.0 294.0,253.2 302.0,257.3 310.0,261.4 318.0,265.6 326.0,269.7 334.0,273.8 342.0,277.7 350.0,281.6 358.0,285.5 366.0,289.3 374.0,293.2 382.0,297.1 390.0,301.1 398.0,305.0 406.0,308.9 414.0,312.6 422.0,316.2 430.0,319.9 438.0,323.6 446.0,327.2 454.0,330.9 462.0,334.6 470.0,338.3 473.0,339.6" fill="none" stroke="#5a1a6a" stroke-width="0.6" /><polyline points="150.0,179.2 158.0,183.7 166.0,188.2 174.0,192.7 182.0,197.2 190.0,201.7 198.0,206.2 206.0,210.7 214.0,215.2 222.0,219.7 230.0,224.2 238.0,228.6 246.0,233.0 254.0,237.3 262.0,241.6 270.0,245.7 278.0,249.8 286.0,254.0 294.0,258.1 302.0,262.2 310.0,266.4 318.0,270.5 326.0,274.6 334.0,278.8 342.0,282.7 350.0,286.5 358.0,290.4 366.0,294.2 374.0,298.1 382.0,302.0 390.0,305.9 398.0,309.9 406.0,313.7 414.0,317.4 422.0,321.0 430.0,324.7 438.0,328.3 446.0,332.0 454.0,335.6 462.0,339.3 470.0,342.9 473.0,344.3" fill="none" stroke="#5a1a6a" stroke-width="0.6" /><polyline points="150.0,182.4 158.0,186.9 166.0,191.4 174.0,196.0 182.0,200.5 190.0,205.0 198.0,209.5 206.0,214.0 214.0,218.5 222.0,223.0 230.0,227.5 238.0,231.9 246.0,236.3 254.0,240.6 262.0,244.9 270.0,249.0 278.0,253.1 286.0,257.3 294.0,261.4 302.0,265.5 310.0,269.7 318.0,273.8 326.0,277.9 334.0,282.0 342.0,285.9 350.0,289.8 358.0,293.6 366.0,297.5 374.0,301.4 382.0,305.3 390.0,309.2 398.0,313.1 406.0,317.0 414.0,320.6 422.0,324.2 430.0,327.9 438.0,331.5 446.0,335.1 454.0,338.8 462.0,342.4 470.0,346.0 473.0,347.4" fill="none" stroke="#5a1a6a" stroke-width="0.6" /><polyline points="150.0,185.6 158.0,190.2 166.0,194.7 174.0,199.2 182.0,203.7 190.0,208.2 198.0,212.7 206.0,217.2 214.0,221.8 222.0,226.3 230.0,230.8 238.0,235.2 246.0,239.5 254.0,243.9 262.0,248.2 270.0,252.3 278.0,256.4 286.0,260.6 294.0,264.7 302.0,268.8 310.0,272.9 318.0,277.1 326.0,281.2 334.0,285.3 342.0,289.2 350.0,293.1 358.0,296.9 366.0,300.8 374.0,304.6 382.0,308.5 390.0,312.5 398.0,316.4 406.0,320.2 414.0,323.8 422.0,327.4 430.0,331.1 438.0,334.7 446.0,338.3 454.0,341.9 462.0,345.5 470.0,349.1 473.0,350.5" fill="none" stroke="#5a1a6a" stroke-width="0.6" /><polyline points="150.0,188.9 158.0,193.4 166.0,197.9 174.0,202.4 182.0,206.9 190.0,211.5 198.0,216.0 206.0,220.5 214.0,225.0 222.0,229.5 230.0,234.0 238.0,238.5 246.0,242.8 254.0,247.2 262.0,251.5 270.0,255.6 278.0,259.7 286.0,263.8 294.0,268.0 302.0,272.1 310.0,276.2 318.0,280.3 326.0,284.5 334.0,288.6 342.0,292.5 350.0,296.3 358.0,300.2 366.0,304.1 374.0,307.9 382.0,311.8 390.0,315.7 398.0,319.6 406.0,323.4 414.0,327.0 422.0,330.6 430.0,334.2 438.0,337.8 446.0,341.4 454.0,345.0 462.0,348.6 470.0,352.2 473.0,353.6" fill="none" stroke="#5a1a6a" stroke-width="0.6" /><polyline points="150.0,192.1 158.0,196.6 166.0,201.1 174.0,205.7 182.0,210.2 190.0,214.7 198.0,219.2 206.0,223.8 214.0,228.3 222.0,232.8 230.0,237.3 238.0,241.8 246.0,246.1 254.0,250.5 262.0,254.8 270.0,258.9 278.0,263.0 286.0,267.1 294.0,271.2 302.0,275.4 310.0,279.5 318.0,283.6 326.0,287.7 334.0,291.9 342.0,295.7 350.0,299.6 358.0,303.5 366.0,307.3 374.0,311.2 382.0,315.1 390.0,319.0 398.0,322.9 406.0,326.7 414.0,330.3 422.0,333.8 430.0,337.4 438.0,341.0 446.0,344.6 454.0,348.2 462.0,351.8 470.0,355.4 473.0,356.7" fill="none" stroke="#5a1a6a" stroke-width="0.6" /><polyline points="150.0,195.3 158.0,199.8 166.0,204.4 174.0,208.9 182.0,213.4 190.0,218.0 198.0,222.5 206.0,227.0 214.0,231.5 222.0,236.1 230.0,240.6 238.0,245.1 246.0,249.4 254.0,253.8 262.0,258.0 270.0,262.2 278.0,266.3 286.0,270.4 294.0,274.5 302.0,278.7 310.0,282.8 318.0,286.9 326.0,291.0 334.0,295.1 342.0,299.0 350.0,302.9 358.0,306.7 366.0,310.6 374.0,314.5 382.0,318.3 390.0,322.2 398.0,326.1 406.0,329.9 414.0,333.5 422.0,337.0 430.0,340.6 438.0,344.2 446.0,347.8 454.0,351.3 462.0,354.9 470.0,358.5 473.0,359.8" fill="none" stroke="#5a1a6a" stroke-width="0.6" /><polyline points="150.0,197.7 158.0,202.3 166.0,206.8 174.0,211.3 182.0,215.9 190.0,220.4 198.0,224.9 206.0,229.5 214.0,234.0 222.0,238.5 230.0,243.1 238.0,247.5 246.0,251.9 254.0,256.2 262.0,260.5 270.0,264.6 278.0,268.8 286.0,272.9 294.0,277.0 302.0,281.1 310.0,285.2 318.0,289.4 326.0,293.5 334.0,297.6 342.0,301.5 350.0,305.3 358.0,309.2 366.0,313.1 374.0,316.9 382.0,320.8 390.0,324.7 398.0,328.5 406.0,332.3 414.0,335.9 422.0,339.5 430.0,343.0 438.0,346.6 446.0,350.1 454.0,353.7 462.0,357.2 470.0,360.8 473.0,362.1" fill="none" stroke="#5a1a6a" stroke-width="0.6" /></g></g><polygon points="207.5,95.2 183.4,109.3 204.5,121.5 207.2,112.0" fill="#990000" /><polygon points="178.0,109.5 205.0,121.0 204.5,125.5 176.0,114.0" fill="#2f8a8a" /><polygon points="196.0,130.0 204.5,124.0 205.5,128.0 203.2,137.6 196.0,143.0 189.0,147.0" fill="#990000" /><polygon points="205.5,124.0 205.0,131.0 203.2,137.6 198.0,143.5 190.0,148.5 183.4,153.0 170.0,158.5 159.0,163.5 145.0,167.5 131.0,170.5 120.0,173.0 120.0,184.0 131.0,181.0 145.0,177.0 159.0,173.0 172.0,168.0 183.0,162.0 191.0,155.0 196.0,148.0 200.0,140.0 204.0,131.0" fill="#990000" /><polygon points="272.4,107.6 253.2,118.0 270.6,128.6 271.8,118.0" fill="#990000" /><polygon points="249.0,120.0 271.0,127.5 270.5,132.0 247.0,124.5" fill="#2f8a8a" /><polygon points="247.0,141.0 272.0,129.0 272.0,155.0" fill="#990000" /><polygon points="272.0,131.0 271.8,140.0 271.0,150.0 269.5,158.2 266.0,166.0 260.0,172.5 252.0,179.0 242.7,184.4 233.0,189.0 221.0,194.5 220.0,203.0 230.0,199.0 240.0,193.0 248.0,186.0 253.0,178.0 256.0,170.0 259.0,162.0 262.0,154.0 265.0,146.0 268.0,138.0" fill="#990000" /><polygon points="360.9,177.0 318.4,198.6 353.2,216.7 357.4,206.3 360.2,191.0" fill="#990000" /><polygon points="318.4,198.6 353.2,216.7 349.0,226.0 312.0,207.0" fill="#2f8a8a" /><polygon points="357.4,206.3 353.2,216.7 349.0,226.0 343.0,234.0 337.2,240.6 327.0,247.5 314.9,253.6 300.0,259.0 290.0,262.0 292.0,266.0 303.0,263.0 318.0,258.0 331.0,251.0 342.0,243.0 350.0,234.0 356.0,225.0 359.0,214.0" fill="#990000" /><polygon points="460.2,208.4 441.4,218.1 458.8,228.6 459.8,218.0" fill="#990000" /><polygon points="429.5,222.3 458.8,228.6 458.5,232.0 422.6,247.4 410.0,246.0 415.0,236.0" fill="#2c8a8c" /><polygon points="422.6,247.4 458.8,230.0 457.8,245.0 456.0,260.0" fill="#990000" /><polygon points="458.8,230.0 458.0,246.0 456.0,257.0 452.5,265.0 448.7,271.0 440.0,281.0 430.0,289.0 418.0,298.0 407.8,304.0 398.0,309.0 389.0,313.0 378.0,317.0 380.0,320.0 392.0,316.0 405.0,310.0 418.0,302.5 431.0,294.0 443.0,285.0 451.0,276.0 456.0,267.0 459.0,256.0 460.5,244.0" fill="#990000" /><polyline points="393.0,191.6 409.8,182.3 409.5,200.0 407.5,222.0 404.1,234.4 398.0,246.0 388.0,256.0 375.0,264.0 360.0,271.0" fill="none" stroke="#990000" stroke-width="2.2" /><polyline points="380.0,219.5 409.8,203.7" fill="none" stroke="#990000" stroke-width="1.8" /></g></svg>
<div style="position:absolute;left:28px;top:63.7px;width:94.5px;height:6.6px;background:#0000f0"></div>
<svg style="position:absolute;left:31.5px;top:64.7px;overflow:visible" width="39.6" height="4.6"><path d="M0.42 0.92L3.78 0.92M2.10 0.10L1.26 2.76M1.26 2.76L0.00 4.40M1.89 2.30L4.20 4.40M0.84 2.53L3.78 2.53M7.02 0.92L10.38 0.92M8.70 0.10L7.86 2.76M7.86 2.76L6.60 4.40M8.49 2.30L10.80 4.40M7.44 2.53L10.38 2.53M9.12 0.23L10.17 1.61M13.83 0.30L13.83 4.30M13.20 1.61L14.46 1.15M13.20 3.45L14.46 2.76M15.06 0.69L17.40 0.69M15.06 0.69L15.06 3.91M17.40 0.69L17.40 4.40M15.06 2.30L17.40 2.30M15.06 3.91L17.40 3.91M20.22 0.92L23.58 0.92M21.90 0.10L21.06 2.76M21.06 2.76L19.80 4.40M21.69 2.30L24.00 4.40M20.64 2.53L23.58 2.53M22.32 0.23L23.37 1.61M26.40 0.69L30.60 0.69M28.50 0.00L28.50 2.53M27.03 2.07L29.97 2.07M27.24 2.53L27.24 4.37M29.76 2.53L29.76 4.37M27.24 4.14L29.76 4.14M33.63 0.30L33.63 4.30M33.00 1.61L34.26 1.15M34.86 0.69L37.20 0.69M34.86 0.69L34.86 3.91M37.20 0.69L37.20 4.40M34.86 2.30L37.20 2.30" stroke="#fff" stroke-opacity="0.95" stroke-width="1.05" fill="none"/></svg>
<div style="position:absolute;left:122.7px;top:63.9px;width:6px;height:6.2px;background:#ece9d8;border:1px solid #a09c90"></div>
<div style="position:absolute;left:123.6px;top:63.2px;white-space:nowrap;font:bold 7px/7px 'Liberation Sans';color:#000">&#215;</div>
<div style="position:absolute;left:28.3px;top:72px;width:99.5px;height:7.3px;background:#fff;border:0.8px solid;border-color:#8a887c #e8e6dc #e8e6dc #8a887c"></div>
<div style="position:absolute;left:121.3px;top:73px;width:5.5px;height:5.3px;background:#e8e6dc;border:1px solid #c0bcae"></div>
<svg style="position:absolute;left:122.50px;top:74.45px" width="4" height="3"><path d="M.3 .3h3.2L1.9 2.5z" fill="#000"/></svg>
<div style="position:absolute;left:29.6px;top:80.6px;width:98.6px;height:306px;background:#fff;border:1px solid #8a877a;border-right:1.5px solid #6e6c62;border-bottom:1.5px solid #6e6c62"></div>
<div style="position:absolute;left:29.6px;top:385.5px;width:32px;height:7.8px;background:#fff;border:1px solid #8a877a;border-top:none;border-radius:0 0 2px 2px"></div>
<svg style="position:absolute;left:33px;top:387px;overflow:visible" width="20.8" height="4.8"><path d="M0.42 0.96L3.78 0.96M2.10 0.10L1.26 2.88M1.26 2.88L0.00 4.60M1.89 2.40L4.20 4.60M0.84 2.64L3.78 2.64M2.52 0.24L3.57 1.68M5.83 0.30L5.83 4.50M5.20 1.68L6.46 1.20M5.20 3.60L6.46 2.88M7.06 0.72L9.40 0.72M7.06 0.72L7.06 4.08M9.40 0.72L9.40 4.60M7.06 2.40L9.40 2.40M10.40 0.72L14.60 0.72M12.50 0.00L12.50 2.64M11.03 2.16L13.97 2.16M11.24 2.64L11.24 4.56M13.76 2.64L13.76 4.56M11.24 4.32L13.76 4.32M15.60 0.72L19.80 0.72M17.70 0.00L17.70 2.64M16.23 2.16L19.17 2.16M16.44 2.64L16.44 4.56M18.96 2.64L18.96 4.56M16.44 4.32L18.96 4.32" stroke="#000" stroke-opacity="0.95" stroke-width="1.0" fill="none"/></svg>
<div style="position:absolute;left:130.2px;top:63.7px;width:0.9px;height:330px;background:#fff"></div>
<div style="position:absolute;left:43.8px;top:88.8px;width:0.8px;height:32.75px;background:repeating-linear-gradient(#b0b0b0 0 1px,transparent 1px 2px)"></div>
<div style="position:absolute;left:51.8px;top:95.75px;width:0.8px;height:18.849999999999994px;background:repeating-linear-gradient(#b0b0b0 0 1px,transparent 1px 2px)"></div>
<div style="position:absolute;left:51.8px;top:123.55px;width:0.8px;height:74.45px;background:repeating-linear-gradient(#b0b0b0 0 1px,transparent 1px 2px)"></div>
<div style="position:absolute;left:60.5px;top:137.45px;width:0.8px;height:53.60000000000002px;background:repeating-linear-gradient(#b0b0b0 0 1px,transparent 1px 2px)"></div>
<div style="position:absolute;left:34px;top:85px;width:5px;height:5px;border:1px solid #c4c4bc;background:#fbfbf8"></div>
<div style="position:absolute;left:35px;top:87px;width:3px;height:1px;background:#8a8a8a"></div>
<svg style="position:absolute;left:39.5px;top:83.30px" width="8" height="7"><path d="M.5 5.5L4 3.2 7.5 .5 6 3.5 7.5 5 4.5 4.6 2.5 6.5z" fill="#303030"/><path d="M1.5 5l3-1.6" stroke="#c0a040" stroke-width=".7"/></svg>
<svg style="position:absolute;left:49px;top:84.39999999999999px;overflow:visible" width="19.6" height="4.8"><path d="M0.00 0.72L3.90 0.72M1.95 0.00L1.95 2.64M0.59 2.16L3.32 2.16M0.78 2.64L0.78 4.56M3.12 2.64L3.12 4.56M0.78 4.32L3.12 4.32M5.29 0.96L8.41 0.96M6.85 0.10L6.07 2.88M6.07 2.88L4.90 4.60M6.66 2.40L8.80 4.60M5.68 2.64L8.41 2.64M10.19 0.96L13.31 0.96M11.75 0.10L10.97 2.88M10.97 2.88L9.80 4.60M11.56 2.40L13.70 4.60M10.58 2.64L13.31 2.64M12.14 0.24L13.12 1.68M15.29 0.30L15.29 4.50M14.70 1.68L15.87 1.20M14.70 3.60L15.87 2.88M16.47 0.72L18.60 0.72M16.47 0.72L16.47 4.08M18.60 0.72L18.60 4.60M16.47 2.40L18.60 2.40" stroke="#000" stroke-opacity="0.7" stroke-width="0.75" fill="none"/></svg>
<div style="position:absolute;left:68.6px;top:83.6px;white-space:nowrap;font:5.2px/6px 'Liberation Sans';color:#333">718</div>
<div style="position:absolute;left:41px;top:92px;width:5px;height:5px;border:1px solid #c4c4bc;background:#fbfbf8"></div>
<div style="position:absolute;left:42px;top:94px;width:3px;height:1px;background:#8a8a8a"></div>
<svg style="position:absolute;left:49px;top:90.35px" width="7" height="7"><path d="M1 1h4.5v1.5L3 4l2.5 1.5V6.5H1V5.5L3.5 4 1 2.5z" fill="#202830" stroke="#556" stroke-width=".4"/></svg>
<svg style="position:absolute;left:57.2px;top:91.35px;overflow:visible" width="29.1" height="4.8"><path d="M0.39 0.96L3.46 0.96M1.92 0.10L1.15 2.88M1.15 2.88L0.00 4.60M1.73 2.40L3.85 4.60M0.77 2.64L3.46 2.64M5.43 0.30L5.43 4.50M4.85 1.68L6.00 1.20M4.85 3.60L6.00 2.88M6.60 0.72L8.70 0.72M6.60 0.72L6.60 4.08M8.70 0.72L8.70 4.60M6.60 2.40L8.70 2.40M6.60 4.08L8.70 4.08M9.70 0.72L13.55 0.72M11.62 0.00L11.62 2.64M10.28 2.16L12.97 2.16M10.47 2.64L10.47 4.56M12.78 2.64L12.78 4.56M10.47 4.32L12.78 4.32M14.93 0.96L18.02 0.96M16.47 0.10L15.70 2.88M15.70 2.88L14.55 4.60M16.28 2.40L18.40 4.60M15.32 2.64L18.02 2.64M16.86 0.24L17.82 1.68M19.79 0.96L22.86 0.96M21.32 0.10L20.55 2.88M20.55 2.88L19.40 4.60M21.13 2.40L23.25 4.60M20.17 2.64L22.86 2.64M24.25 0.72L28.10 0.72M26.18 0.00L26.18 2.64M24.83 2.16L27.52 2.16M25.02 2.64L25.02 4.56M27.33 2.64L27.33 4.56M25.02 4.32L27.33 4.32" stroke="#000" stroke-opacity="0.72" stroke-width="0.75" fill="none"/></svg>
<div style="position:absolute;left:41px;top:120px;width:5px;height:5px;border:1px solid #c4c4bc;background:#fbfbf8"></div>
<div style="position:absolute;left:42px;top:122px;width:3px;height:1px;background:#8a8a8a"></div>
<svg style="position:absolute;left:49px;top:118.15px" width="7" height="7"><path d="M.8 6.2l1.2-2.6 4-3 .8.8-3 4z" fill="#101010"/><path d="M1.2 4.5l1.6 1.6" stroke="#607040" stroke-width=".8"/></svg>
<svg style="position:absolute;left:57.2px;top:119.14999999999999px;overflow:visible" width="19.4" height="4.8"><path d="M0.58 0.30L0.58 4.50M0.00 1.68L1.15 1.20M0.00 3.60L1.15 2.88M1.75 0.72L3.85 0.72M1.75 0.72L1.75 4.08M3.85 0.72L3.85 4.60M1.75 2.40L3.85 2.40M4.85 0.72L8.70 0.72M6.77 0.00L6.77 2.64M5.43 2.16L8.12 2.16M5.62 2.64L5.62 4.56M7.93 2.64L7.93 4.56M5.62 4.32L7.93 4.32M10.28 0.30L10.28 4.50M9.70 1.68L10.85 1.20M11.45 0.72L13.55 0.72M11.45 0.72L11.45 4.08M13.55 0.72L13.55 4.60M11.45 2.40L13.55 2.40M14.93 0.96L18.02 0.96M16.47 0.10L15.70 2.88M15.70 2.88L14.55 4.60M16.28 2.40L18.40 4.60M15.32 2.64L18.02 2.64M16.86 0.24L17.82 1.68" stroke="#000" stroke-opacity="0.72" stroke-width="0.75" fill="none"/></svg>
<div style="position:absolute;left:51px;top:99px;width:5px;height:5px;border:1px solid #c4c4bc;background:#fbfbf8"></div>
<div style="position:absolute;left:52px;top:101px;width:3px;height:1px;background:#8a8a8a"></div>
<div style="position:absolute;left:53px;top:100px;width:1px;height:3px;background:#8a8a8a"></div>
<svg style="position:absolute;left:57px;top:97.30px" width="7" height="7"><path d="M1.5 1.2c1-.8 2.2-.5 2.6.4 1 0 2 .8 2 2v2.2H2.2C1.2 5.8.8 4.8 1 4z" fill="#fff" stroke="#444" stroke-width=".55"/><path d="M.6 6.2l2.6-1.8" stroke="#1020d0" stroke-width="1.3"/></svg>
<div style="position:absolute;left:65.3px;top:97.5px;white-space:nowrap;font:5.2px/6px 'Liberation Sans';color:#333">CFD</div>
<svg style="position:absolute;left:74.8px;top:98.3px;overflow:visible" width="9.7" height="4.8"><path d="M0.00 0.72L3.85 0.72M1.92 0.00L1.92 2.64M0.58 2.16L3.27 2.16M0.77 2.64L0.77 4.56M3.08 2.64L3.08 4.56M0.77 4.32L3.08 4.32M5.43 0.30L5.43 4.50M4.85 1.68L6.00 1.20M6.60 0.72L8.70 0.72M6.60 0.72L6.60 4.08M8.70 0.72L8.70 4.60M6.60 2.40L8.70 2.40" stroke="#000" stroke-opacity="0.72" stroke-width="0.75" fill="none"/></svg>
<div style="position:absolute;left:51px;top:106px;width:5px;height:5px;border:1px solid #c4c4bc;background:#fbfbf8"></div>
<div style="position:absolute;left:52px;top:108px;width:3px;height:1px;background:#8a8a8a"></div>
<div style="position:absolute;left:53px;top:107px;width:1px;height:3px;background:#8a8a8a"></div>
<svg style="position:absolute;left:57px;top:104.25px" width="7" height="7"><path d="M1.5 1.2c1-.8 2.2-.5 2.6.4 1 0 2 .8 2 2v2.2H2.2C1.2 5.8.8 4.8 1 4z" fill="#fff" stroke="#444" stroke-width=".55"/><path d="M.6 6.2l2.6-1.8" stroke="#1020d0" stroke-width="1.3"/></svg>
<svg style="position:absolute;left:65.3px;top:105.25px;overflow:visible" width="29.1" height="4.8"><path d="M0.39 0.96L3.46 0.96M1.92 0.10L1.15 2.88M1.15 2.88L0.00 4.60M1.73 2.40L3.85 4.60M0.77 2.64L3.46 2.64M2.31 0.24L3.27 1.68M5.23 0.96L8.31 0.96M6.77 0.10L6.00 2.88M6.00 2.88L4.85 4.60M6.58 2.40L8.70 4.60M5.62 2.64L8.31 2.64M7.16 0.24L8.12 1.68M10.08 0.96L13.16 0.96M11.62 0.10L10.85 2.88M10.85 2.88L9.70 4.60M11.43 2.40L13.55 4.60M10.47 2.64L13.16 2.64M12.01 0.24L12.97 1.68M14.55 0.72L18.40 0.72M16.47 0.00L16.47 2.64M15.13 2.16L17.82 2.16M15.32 2.64L15.32 4.56M17.63 2.64L17.63 4.56M15.32 4.32L17.63 4.32M19.98 0.30L19.98 4.50M19.40 1.68L20.55 1.20M21.16 0.72L23.25 0.72M21.16 0.72L21.16 4.08M23.25 0.72L23.25 4.60M21.16 2.40L23.25 2.40M24.25 0.72L28.10 0.72M26.18 0.00L26.18 2.64M24.83 2.16L27.52 2.16M25.02 2.64L25.02 4.56M27.33 2.64L27.33 4.56M25.02 4.32L27.33 4.32" stroke="#000" stroke-opacity="0.72" stroke-width="0.75" fill="none"/></svg>
<div style="position:absolute;left:51.3px;top:114.6px;width:4.700000000000003px;height:0.8px;background:repeating-linear-gradient(90deg,#b0b0b0 0 1px,transparent 1px 2px)"></div>
<svg style="position:absolute;left:57px;top:111.20px" width="7" height="7"><path d="M1.5 1.2c1-.8 2.2-.5 2.6.4 1 0 2 .8 2 2v2.2H2.2C1.2 5.8.8 4.8 1 4z" fill="#fff" stroke="#444" stroke-width=".55"/><path d="M.6 6.2l2.6-1.8" stroke="#1020d0" stroke-width="1.3"/></svg>
<svg style="position:absolute;left:65.3px;top:112.19999999999999px;overflow:visible" width="38.8" height="4.8"><path d="M0.39 0.96L3.46 0.96M1.92 0.10L1.15 2.88M1.15 2.88L0.00 4.60M1.73 2.40L3.85 4.60M0.77 2.64L3.46 2.64M5.23 0.96L8.31 0.96M6.77 0.10L6.00 2.88M6.00 2.88L4.85 4.60M6.58 2.40L8.70 4.60M5.62 2.64L8.31 2.64M10.28 0.30L10.28 4.50M9.70 1.68L10.85 1.20M11.45 0.72L13.55 0.72M11.45 0.72L11.45 4.08M13.55 0.72L13.55 4.60M11.45 2.40L13.55 2.40M11.45 4.08L13.55 4.08M15.13 0.30L15.13 4.50M14.55 1.68L15.70 1.20M16.30 0.72L18.40 0.72M16.30 0.72L16.30 4.08M18.40 0.72L18.40 4.60M16.30 2.40L18.40 2.40M16.30 4.08L18.40 4.08M19.98 0.30L19.98 4.50M19.40 1.68L20.55 1.20M21.16 0.72L23.25 0.72M21.16 0.72L21.16 4.08M23.25 0.72L23.25 4.60M21.16 2.40L23.25 2.40M21.16 4.08L23.25 4.08M24.83 0.30L24.83 4.50M24.25 1.68L25.41 1.20M26.01 0.72L28.10 0.72M26.01 0.72L26.01 4.08M28.10 0.72L28.10 4.60M26.01 2.40L28.10 2.40M26.01 4.08L28.10 4.08M29.68 0.30L29.68 4.50M29.10 1.68L30.25 1.20M29.10 3.60L30.25 2.88M30.86 0.72L32.95 0.72M30.86 0.72L30.86 4.08M32.95 0.72L32.95 4.60M30.86 2.40L32.95 2.40M30.86 4.08L32.95 4.08M33.95 0.72L37.80 0.72M35.87 0.00L35.87 2.64M34.53 2.16L37.22 2.16M34.72 2.64L34.72 4.56M37.03 2.64L37.03 4.56M34.72 4.32L37.03 4.32" stroke="#000" stroke-opacity="0.72" stroke-width="0.75" fill="none"/></svg>
<div style="position:absolute;left:51px;top:127px;width:5px;height:5px;border:1px solid #c4c4bc;background:#fbfbf8"></div>
<div style="position:absolute;left:52px;top:129px;width:3px;height:1px;background:#8a8a8a"></div>
<div style="position:absolute;left:53px;top:128px;width:1px;height:3px;background:#8a8a8a"></div>
<svg style="position:absolute;left:57px;top:125.10px" width="7" height="7"><path d="M1.5 1.2c1-.8 2.2-.5 2.6.4 1 0 2 .8 2 2v2.2H2.2C1.2 5.8.8 4.8 1 4z" fill="#fff" stroke="#444" stroke-width=".55"/><path d="M.6 6.2l2.6-1.8" stroke="#1020d0" stroke-width="1.3"/></svg>
<div style="position:absolute;left:65.3px;top:125.3px;white-space:nowrap;font:5.2px/6px 'Liberation Sans';color:#333">FEM</div>
<svg style="position:absolute;left:74.8px;top:126.1px;overflow:visible" width="9.7" height="4.8"><path d="M0.00 0.72L3.85 0.72M1.92 0.00L1.92 2.64M0.58 2.16L3.27 2.16M0.77 2.64L0.77 4.56M3.08 2.64L3.08 4.56M0.77 4.32L3.08 4.32M5.43 0.30L5.43 4.50M4.85 1.68L6.00 1.20M6.60 0.72L8.70 0.72M6.60 0.72L6.60 4.08M8.70 0.72L8.70 4.60M6.60 2.40L8.70 2.40" stroke="#000" stroke-opacity="0.72" stroke-width="0.75" fill="none"/></svg>
<div style="position:absolute;left:51px;top:134px;width:5px;height:5px;border:1px solid #c4c4bc;background:#fbfbf8"></div>
<div style="position:absolute;left:52px;top:136px;width:3px;height:1px;background:#8a8a8a"></div>
<svg style="position:absolute;left:57px;top:132.05px" width="7" height="7"><path d="M1.5 1.2c1-.8 2.2-.5 2.6.4 1 0 2 .8 2 2v2.2H2.2C1.2 5.8.8 4.8 1 4z" fill="#fff" stroke="#444" stroke-width=".55"/><path d="M.6 6.2l2.6-1.8" stroke="#1020d0" stroke-width="1.3"/></svg>
<svg style="position:absolute;left:65.3px;top:133.04999999999998px;overflow:visible" width="19.4" height="4.8"><path d="M0.58 0.30L0.58 4.50M0.00 1.68L1.15 1.20M0.00 3.60L1.15 2.88M1.75 0.72L3.85 0.72M1.75 0.72L1.75 4.08M3.85 0.72L3.85 4.60M1.75 2.40L3.85 2.40M1.75 4.08L3.85 4.08M5.23 0.96L8.31 0.96M6.77 0.10L6.00 2.88M6.00 2.88L4.85 4.60M6.58 2.40L8.70 4.60M5.62 2.64L8.31 2.64M7.16 0.24L8.12 1.68M10.08 0.96L13.16 0.96M11.62 0.10L10.85 2.88M10.85 2.88L9.70 4.60M11.43 2.40L13.55 4.60M10.47 2.64L13.16 2.64M12.01 0.24L12.97 1.68M14.93 0.96L18.02 0.96M16.47 0.10L15.70 2.88M15.70 2.88L14.55 4.60M16.28 2.40L18.40 4.60M15.32 2.64L18.02 2.64M16.86 0.24L17.82 1.68" stroke="#000" stroke-opacity="0.72" stroke-width="0.75" fill="none"/></svg>
<div style="position:absolute;left:51.3px;top:198.0px;width:4.700000000000003px;height:0.8px;background:repeating-linear-gradient(90deg,#b0b0b0 0 1px,transparent 1px 2px)"></div>
<svg style="position:absolute;left:57px;top:194.60px" width="7" height="7"><path d="M1.5 1.2c1-.8 2.2-.5 2.6.4 1 0 2 .8 2 2v2.2H2.2C1.2 5.8.8 4.8 1 4z" fill="#fff" stroke="#444" stroke-width=".55"/><path d="M.6 6.2l2.6-1.8" stroke="#1020d0" stroke-width="1.3"/></svg>
<svg style="position:absolute;left:65.3px;top:195.6px;overflow:visible" width="19.4" height="4.8"><path d="M0.58 0.30L0.58 4.50M0.00 1.68L1.15 1.20M0.00 3.60L1.15 2.88M1.75 0.72L3.85 0.72M1.75 0.72L1.75 4.08M3.85 0.72L3.85 4.60M1.75 2.40L3.85 2.40M5.23 0.96L8.31 0.96M6.77 0.10L6.00 2.88M6.00 2.88L4.85 4.60M6.58 2.40L8.70 4.60M5.62 2.64L8.31 2.64M7.16 0.24L8.12 1.68M9.70 0.72L13.55 0.72M11.62 0.00L11.62 2.64M10.28 2.16L12.97 2.16M10.47 2.64L10.47 4.56M12.78 2.64L12.78 4.56M10.47 4.32L12.78 4.32M15.13 0.30L15.13 4.50M14.55 1.68L15.70 1.20M14.55 3.60L15.70 2.88M16.30 0.72L18.40 0.72M16.30 0.72L16.30 4.08M18.40 0.72L18.40 4.60M16.30 2.40L18.40 2.40M16.30 4.08L18.40 4.08" stroke="#000" stroke-opacity="0.72" stroke-width="0.75" fill="none"/></svg>
<div style="position:absolute;left:60px;top:142.4px;width:4px;height:0.8px;background:repeating-linear-gradient(90deg,#b0b0b0 0 1px,transparent 1px 2px)"></div>
<svg style="position:absolute;left:64px;top:139.10px" width="7" height="7"><rect x=".5" y="1" width="2.6" height="5.4" fill="#1a6878"/><rect x="3.1" y="1" width="1.3" height="5.4" fill="#e8d848"/><rect x="4.4" y="1.6" width="2" height="4.8" fill="#202828"/><path d="M1 1.6h1.8" stroke="#8fd" stroke-width=".5"/></svg>
<div style="position:absolute;left:73.5px;top:139.20000000000002px;white-space:nowrap;font:5.2px/6px 'Liberation Sans';color:#333">RC001</div>
<div style="position:absolute;left:60px;top:149.35px;width:4px;height:0.8px;background:repeating-linear-gradient(90deg,#b0b0b0 0 1px,transparent 1px 2px)"></div>
<svg style="position:absolute;left:64px;top:146.05px" width="7" height="7"><rect x=".5" y="1" width="2.6" height="5.4" fill="#1a6878"/><rect x="3.1" y="1" width="1.3" height="5.4" fill="#e8d848"/><rect x="4.4" y="1.6" width="2" height="4.8" fill="#202828"/><path d="M1 1.6h1.8" stroke="#8fd" stroke-width=".5"/></svg>
<div style="position:absolute;left:73.5px;top:146.15px;white-space:nowrap;font:5.2px/6px 'Liberation Sans';color:#333">Only1</div>
<div style="position:absolute;left:60px;top:156.3px;width:4px;height:0.8px;background:repeating-linear-gradient(90deg,#b0b0b0 0 1px,transparent 1px 2px)"></div>
<svg style="position:absolute;left:64px;top:153.00px" width="7" height="7"><rect x=".5" y="1" width="2.6" height="5.4" fill="#1a6878"/><rect x="3.1" y="1" width="1.3" height="5.4" fill="#e8d848"/><rect x="4.4" y="1.6" width="2" height="4.8" fill="#202828"/><path d="M1 1.6h1.8" stroke="#8fd" stroke-width=".5"/></svg>
<div style="position:absolute;left:73.5px;top:153.10000000000002px;white-space:nowrap;font:5.2px/6px 'Liberation Sans';color:#333">5</div>
<div style="position:absolute;left:60px;top:163.25px;width:4px;height:0.8px;background:repeating-linear-gradient(90deg,#b0b0b0 0 1px,transparent 1px 2px)"></div>
<svg style="position:absolute;left:64px;top:159.95px" width="7" height="7"><rect x=".5" y="1" width="2.6" height="5.4" fill="#1a6878"/><rect x="3.1" y="1" width="1.3" height="5.4" fill="#e8d848"/><rect x="4.4" y="1.6" width="2" height="4.8" fill="#202828"/><path d="M1 1.6h1.8" stroke="#8fd" stroke-width=".5"/></svg>
<div style="position:absolute;left:73.5px;top:160.05px;white-space:nowrap;font:5.2px/6px 'Liberation Sans';color:#333">002</div>
<div style="position:absolute;left:60px;top:170.2px;width:4px;height:0.8px;background:repeating-linear-gradient(90deg,#b0b0b0 0 1px,transparent 1px 2px)"></div>
<svg style="position:absolute;left:64px;top:166.90px" width="7" height="7"><rect x=".5" y="1" width="2.6" height="5.4" fill="#1a6878"/><rect x="3.1" y="1" width="1.3" height="5.4" fill="#e8d848"/><rect x="4.4" y="1.6" width="2" height="4.8" fill="#202828"/><path d="M1 1.6h1.8" stroke="#8fd" stroke-width=".5"/></svg>
<div style="position:absolute;left:73.5px;top:167.0px;white-space:nowrap;font:5.2px/6px 'Liberation Sans';color:#333">006</div>
<div style="position:absolute;left:60px;top:177.15px;width:4px;height:0.8px;background:repeating-linear-gradient(90deg,#b0b0b0 0 1px,transparent 1px 2px)"></div>
<svg style="position:absolute;left:64px;top:173.85px" width="7" height="7"><rect x=".5" y="1" width="2.6" height="5.4" fill="#1a6878"/><rect x="3.1" y="1" width="1.3" height="5.4" fill="#e8d848"/><rect x="4.4" y="1.6" width="2" height="4.8" fill="#202828"/><path d="M1 1.6h1.8" stroke="#8fd" stroke-width=".5"/></svg>
<div style="position:absolute;left:73.5px;top:173.95000000000002px;white-space:nowrap;font:5.2px/6px 'Liberation Sans';color:#333">Test02</div>
<div style="position:absolute;left:60px;top:184.1px;width:4px;height:0.8px;background:repeating-linear-gradient(90deg,#b0b0b0 0 1px,transparent 1px 2px)"></div>
<svg style="position:absolute;left:64px;top:180.80px" width="7" height="7"><rect x=".5" y="1" width="2.6" height="5.4" fill="#1a6878"/><rect x="3.1" y="1" width="1.3" height="5.4" fill="#e8d848"/><rect x="4.4" y="1.6" width="2" height="4.8" fill="#202828"/><path d="M1 1.6h1.8" stroke="#8fd" stroke-width=".5"/></svg>
<div style="position:absolute;left:73.5px;top:180.9px;white-space:nowrap;font:5.2px/6px 'Liberation Sans';color:#333">test1</div>
<div style="position:absolute;left:60px;top:191.05px;width:4px;height:0.8px;background:repeating-linear-gradient(90deg,#b0b0b0 0 1px,transparent 1px 2px)"></div>
<svg style="position:absolute;left:64px;top:187.75px" width="7" height="7"><rect x=".5" y="1" width="2.6" height="5.4" fill="#1a6878"/><rect x="3.1" y="1" width="1.3" height="5.4" fill="#e8d848"/><rect x="4.4" y="1.6" width="2" height="4.8" fill="#202828"/><path d="M1 1.6h1.8" stroke="#8fd" stroke-width=".5"/></svg>
<div style="position:absolute;left:72.8px;top:187.85000000000002px;width:11.4px;height:6px;background:#316ac5"></div>
<div style="position:absolute;left:73.5px;top:187.85000000000002px;white-space:nowrap;font:5.2px/6px 'Liberation Sans';color:#fff">test2</div>
<div style="position:absolute;left:81.2px;top:192.4px;width:51.5px;height:40.5px;background:#fff;border:1px solid #8d8c88;box-shadow:1px 1px 0 #b8b5a8"></div>
<svg style="position:absolute;left:88.5px;top:194.4px;overflow:visible" width="35.0" height="4.8"><path d="M0.60 0.30L0.60 4.50M0.00 1.68L1.20 1.20M1.80 0.72L4.00 0.72M1.80 0.72L1.80 4.08M4.00 0.72L4.00 4.60M1.80 2.40L4.00 2.40M1.80 4.08L4.00 4.08M5.00 0.72L9.00 0.72M7.00 0.00L7.00 2.64M5.60 2.16L8.40 2.16M5.80 2.64L5.80 4.56M8.20 2.64L8.20 4.56M5.80 4.32L8.20 4.32M10.60 0.30L10.60 4.50M10.00 1.68L11.20 1.20M10.00 3.60L11.20 2.88M11.80 0.72L14.00 0.72M11.80 0.72L11.80 4.08M14.00 0.72L14.00 4.60M11.80 2.40L14.00 2.40M11.80 4.08L14.00 4.08M15.60 0.30L15.60 4.50M15.00 1.68L16.20 1.20M16.80 0.72L19.00 0.72M16.80 0.72L16.80 4.08M19.00 0.72L19.00 4.60M16.80 2.40L19.00 2.40M20.60 0.30L20.60 4.50M20.00 1.68L21.20 1.20M21.80 0.72L24.00 0.72M21.80 0.72L21.80 4.08M24.00 0.72L24.00 4.60M21.80 2.40L24.00 2.40M25.00 0.72L29.00 0.72M27.00 0.00L27.00 2.64M25.60 2.16L28.40 2.16M25.80 2.64L25.80 4.56M28.20 2.64L28.20 4.56M25.80 4.32L28.20 4.32M30.00 0.72L34.00 0.72M32.00 0.00L32.00 2.64M30.60 2.16L33.40 2.16M30.80 2.64L30.80 4.56M33.20 2.64L33.20 4.56M30.80 4.32L33.20 4.32" stroke="#000" stroke-opacity="0.7" stroke-width="0.75" fill="none"/></svg>
<svg style="position:absolute;left:88.5px;top:201.4px;overflow:visible" width="35.0" height="4.8"><path d="M0.40 0.96L3.60 0.96M2.00 0.10L1.20 2.88M1.20 2.88L0.00 4.60M1.80 2.40L4.00 4.60M0.80 2.64L3.60 2.64M2.40 0.24L3.40 1.68M5.40 0.96L8.60 0.96M7.00 0.10L6.20 2.88M6.20 2.88L5.00 4.60M6.80 2.40L9.00 4.60M5.80 2.64L8.60 2.64M10.40 0.96L13.60 0.96M12.00 0.10L11.20 2.88M11.20 2.88L10.00 4.60M11.80 2.40L14.00 4.60M10.80 2.64L13.60 2.64M12.40 0.24L13.40 1.68M15.00 0.72L19.00 0.72M17.00 0.00L17.00 2.64M15.60 2.16L18.40 2.16M15.80 2.64L15.80 4.56M18.20 2.64L18.20 4.56M15.80 4.32L18.20 4.32M20.60 0.30L20.60 4.50M20.00 1.68L21.20 1.20M20.00 3.60L21.20 2.88M21.80 0.72L24.00 0.72M21.80 0.72L21.80 4.08M24.00 0.72L24.00 4.60M21.80 2.40L24.00 2.40M21.80 4.08L24.00 4.08M25.00 0.72L29.00 0.72M27.00 0.00L27.00 2.64M25.60 2.16L28.40 2.16M25.80 2.64L25.80 4.56M28.20 2.64L28.20 4.56M25.80 4.32L28.20 4.32M30.00 0.72L34.00 0.72M32.00 0.00L32.00 2.64M30.60 2.16L33.40 2.16M30.80 2.64L30.80 4.56M33.20 2.64L33.20 4.56M30.80 4.32L33.20 4.32" stroke="#000" stroke-opacity="0.7" stroke-width="0.75" fill="none"/></svg>
<svg style="position:absolute;left:88.5px;top:208.4px;overflow:visible" width="35.0" height="4.8"><path d="M0.40 0.96L3.60 0.96M2.00 0.10L1.20 2.88M1.20 2.88L0.00 4.60M1.80 2.40L4.00 4.60M0.80 2.64L3.60 2.64M5.60 0.30L5.60 4.50M5.00 1.68L6.20 1.20M6.80 0.72L9.00 0.72M6.80 0.72L6.80 4.08M9.00 0.72L9.00 4.60M6.80 2.40L9.00 2.40M6.80 4.08L9.00 4.08M10.60 0.30L10.60 4.50M10.00 1.68L11.20 1.20M11.80 0.72L14.00 0.72M11.80 0.72L11.80 4.08M14.00 0.72L14.00 4.60M11.80 2.40L14.00 2.40M15.00 0.72L19.00 0.72M17.00 0.00L17.00 2.64M15.60 2.16L18.40 2.16M15.80 2.64L15.80 4.56M18.20 2.64L18.20 4.56M15.80 4.32L18.20 4.32M20.60 0.30L20.60 4.50M20.00 1.68L21.20 1.20M21.80 0.72L24.00 0.72M21.80 0.72L21.80 4.08M24.00 0.72L24.00 4.60M21.80 2.40L24.00 2.40M25.60 0.30L25.60 4.50M25.00 1.68L26.20 1.20M25.00 3.60L26.20 2.88M26.80 0.72L29.00 0.72M26.80 0.72L26.80 4.08M29.00 0.72L29.00 4.60M26.80 2.40L29.00 2.40M30.00 0.72L34.00 0.72M32.00 0.00L32.00 2.64M30.60 2.16L33.40 2.16M30.80 2.64L30.80 4.56M33.20 2.64L33.20 4.56M30.80 4.32L33.20 4.32" stroke="#000" stroke-opacity="0.7" stroke-width="0.75" fill="none"/></svg>
<div style="position:absolute;left:83px;top:215.4px;width:48px;height:0.7px;background:#aca899"></div>
<div style="position:absolute;left:82.4px;top:217.6px;width:49.2px;height:6.4px;background:#316ac5"></div>
<svg style="position:absolute;left:88.5px;top:218.3px;overflow:visible" width="20.0" height="4.8"><path d="M0.60 0.30L0.60 4.50M0.00 1.68L1.20 1.20M0.00 3.60L1.20 2.88M1.80 0.72L4.00 0.72M1.80 0.72L1.80 4.08M4.00 0.72L4.00 4.60M1.80 2.40L4.00 2.40M5.00 0.72L9.00 0.72M7.00 0.00L7.00 2.64M5.60 2.16L8.40 2.16M5.80 2.64L5.80 4.56M8.20 2.64L8.20 4.56M5.80 4.32L8.20 4.32M10.00 0.72L14.00 0.72M12.00 0.00L12.00 2.64M10.60 2.16L13.40 2.16M10.80 2.64L10.80 4.56M13.20 2.64L13.20 4.56M10.80 4.32L13.20 4.32M15.60 0.30L15.60 4.50M15.00 1.68L16.20 1.20M16.80 0.72L19.00 0.72M16.80 0.72L16.80 4.08M19.00 0.72L19.00 4.60M16.80 2.40L19.00 2.40M16.80 4.08L19.00 4.08" stroke="#fff" stroke-opacity="0.95" stroke-width="0.75" fill="none"/></svg>
<svg style="position:absolute;left:128px;top:219px" width="3" height="4"><path d="M.3 .2v3.4L2.5 1.9z" fill="#fff"/></svg>
<svg style="position:absolute;left:88.5px;top:225.8px;overflow:visible" width="20.0" height="4.8"><path d="M0.60 0.30L0.60 4.50M0.00 1.68L1.20 1.20M1.80 0.72L4.00 0.72M1.80 0.72L1.80 4.08M4.00 0.72L4.00 4.60M1.80 2.40L4.00 2.40M1.80 4.08L4.00 4.08M5.00 0.72L9.00 0.72M7.00 0.00L7.00 2.64M5.60 2.16L8.40 2.16M5.80 2.64L5.80 4.56M8.20 2.64L8.20 4.56M5.80 4.32L8.20 4.32M10.60 0.30L10.60 4.50M10.00 1.68L11.20 1.20M11.80 0.72L14.00 0.72M11.80 0.72L11.80 4.08M14.00 0.72L14.00 4.60M11.80 2.40L14.00 2.40M15.60 0.30L15.60 4.50M15.00 1.68L16.20 1.20M16.80 0.72L19.00 0.72M16.80 0.72L16.80 4.08M19.00 0.72L19.00 4.60M16.80 2.40L19.00 2.40" stroke="#000" stroke-opacity="0.7" stroke-width="0.75" fill="none"/></svg>
<div style="position:absolute;left:131.4px;top:216.3px;width:48.3px;height:16.5px;background:#fff;border:1px solid #8d8c88;box-shadow:1px 1px 0 #b8b5a8"></div>
<div style="position:absolute;left:133px;top:217.6px;width:44.8px;height:6.4px;background:#316ac5"></div>
<svg style="position:absolute;left:139.2px;top:218.3px;overflow:visible" width="30.0" height="4.8"><path d="M0.40 0.96L3.60 0.96M2.00 0.10L1.20 2.88M1.20 2.88L0.00 4.60M1.80 2.40L4.00 4.60M0.80 2.64L3.60 2.64M5.60 0.30L5.60 4.50M5.00 1.68L6.20 1.20M6.80 0.72L9.00 0.72M6.80 0.72L6.80 4.08M9.00 0.72L9.00 4.60M6.80 2.40L9.00 2.40M6.80 4.08L9.00 4.08M10.40 0.96L13.60 0.96M12.00 0.10L11.20 2.88M11.20 2.88L10.00 4.60M11.80 2.40L14.00 4.60M10.80 2.64L13.60 2.64M12.40 0.24L13.40 1.68M15.60 0.30L15.60 4.50M15.00 1.68L16.20 1.20M15.00 3.60L16.20 2.88M16.80 0.72L19.00 0.72M16.80 0.72L16.80 4.08M19.00 0.72L19.00 4.60M16.80 2.40L19.00 2.40M20.00 0.72L24.00 0.72M22.00 0.00L22.00 2.64M20.60 2.16L23.40 2.16M20.80 2.64L20.80 4.56M23.20 2.64L23.20 4.56M20.80 4.32L23.20 4.32M25.40 0.96L28.60 0.96M27.00 0.10L26.20 2.88M26.20 2.88L25.00 4.60M26.80 2.40L29.00 4.60M25.80 2.64L28.60 2.64M27.40 0.24L28.40 1.68" stroke="#fff" stroke-opacity="0.95" stroke-width="0.75" fill="none"/></svg>
<svg style="position:absolute;left:139.2px;top:225.8px;overflow:visible" width="30.0" height="4.8"><path d="M0.00 0.72L4.00 0.72M2.00 0.00L2.00 2.64M0.60 2.16L3.40 2.16M0.80 2.64L0.80 4.56M3.20 2.64L3.20 4.56M0.80 4.32L3.20 4.32M5.40 0.96L8.60 0.96M7.00 0.10L6.20 2.88M6.20 2.88L5.00 4.60M6.80 2.40L9.00 4.60M5.80 2.64L8.60 2.64M10.00 0.72L14.00 0.72M12.00 0.00L12.00 2.64M10.60 2.16L13.40 2.16M10.80 2.64L10.80 4.56M13.20 2.64L13.20 4.56M10.80 4.32L13.20 4.32M15.00 0.72L19.00 0.72M17.00 0.00L17.00 2.64M15.60 2.16L18.40 2.16M15.80 2.64L15.80 4.56M18.20 2.64L18.20 4.56M15.80 4.32L18.20 4.32M20.60 0.30L20.60 4.50M20.00 1.68L21.20 1.20M20.00 3.60L21.20 2.88M21.80 0.72L24.00 0.72M21.80 0.72L21.80 4.08M24.00 0.72L24.00 4.60M21.80 2.40L24.00 2.40M21.80 4.08L24.00 4.08M25.60 0.30L25.60 4.50M25.00 1.68L26.20 1.20M26.80 0.72L29.00 0.72M26.80 0.72L26.80 4.08M29.00 0.72L29.00 4.60M26.80 2.40L29.00 2.40M26.80 4.08L29.00 4.08" stroke="#000" stroke-opacity="0.7" stroke-width="0.75" fill="none"/></svg>
<div style="position:absolute;left:475.3px;top:63.7px;width:80.2px;height:6.3px;background:#0a40e6"></div>
<div style="position:absolute;left:477.5px;top:63.6px;white-space:nowrap;font:bold 6px/6.4px 'Liberation Mono';color:#fff;letter-spacing:0.3px;transform:scaleX(0.72);transform-origin:0 0">Workspace Explorer</div>
<div style="position:absolute;left:548px;top:64.5px;width:6px;height:5px;background:#d4d0c8;border:0.8px solid #808080"></div>
<div style="position:absolute;left:549.2px;top:63.8px;white-space:nowrap;font:bold 5px/6px 'Liberation Sans';color:#000">&#215;</div>
<div style="position:absolute;left:475.3px;top:71.3px;width:66.7px;height:6.7px;background:#fff;border:0.8px solid;border-color:#8a887c #e8e6dc #e8e6dc #8a887c"></div>
<div style="position:absolute;left:535.5px;top:72.3px;width:5.5px;height:4.7px;background:#e8e6dc;border:1px solid #c0bcae"></div>
<svg style="position:absolute;left:536.70px;top:73.45px" width="4" height="3"><path d="M.3 .3h3.2L1.9 2.5z" fill="#000"/></svg>
<div style="position:absolute;left:476.8px;top:80.2px;width:78px;height:301px;background:#fff;border:1px solid #8a877a;border-right:1.5px solid #6e6c62;border-bottom:1.5px solid #6e6c62"></div>
<div style="position:absolute;left:478px;top:375px;width:74px;height:5px;background:linear-gradient(#eef3ff,#dfe8fb)"></div>
<div style="position:absolute;left:484px;top:375.6px;width:48px;height:3.8px;background:#c3d3fd;border-radius:1px"></div>
<div style="position:absolute;left:478.5px;top:375.5px;width:5px;height:4.5px;background:#c8d8f8;border-radius:1px"></div>
<div style="position:absolute;left:546.3px;top:375.5px;width:5px;height:4.5px;background:#c8d8f8;border-radius:1px"></div>
<div style="position:absolute;left:479px;top:374.6px;white-space:nowrap;font:bold 5px/6px 'Liberation Sans';color:#3050a0">&#8249;</div>
<div style="position:absolute;left:547.6px;top:374.6px;white-space:nowrap;font:bold 5px/6px 'Liberation Sans';color:#3050a0">&#8250;</div>
<div style="position:absolute;left:477.5px;top:386.5px;width:18.5px;height:6.5px;border-left:0.7px solid #fff;border-bottom:0.8px solid #8a877a;border-right:0.8px solid #8a877a"></div>
<div style="position:absolute;left:479px;top:387px;white-space:nowrap;font:bold 5.4px/6px 'Liberation Mono';color:#111;transform:scaleX(0.66);transform-origin:0 0;white-space:pre">System</div>
<div style="position:absolute;left:496px;top:386.2px;width:16px;height:6.6px;border:0.8px solid #8a877a;border-top-color:#fff;border-left-color:#fff;background:#f6f5ee"></div>
<div style="position:absolute;left:497.8px;top:386.8px;white-space:nowrap;font:bold 5.4px/6px 'Liberation Mono';color:#111;transform:scaleX(0.66);transform-origin:0 0;white-space:pre">Space</div>
<div style="position:absolute;left:513px;top:386.2px;width:15.6px;height:6.6px;border:0.8px solid #8a877a;border-top-color:#fff;border-left-color:#fff;background:#f6f5ee"></div>
<div style="position:absolute;left:515.5px;top:386.8px;white-space:nowrap;font:bold 5.4px/6px 'Liberation Mono';color:#111;transform:scaleX(0.66);transform-origin:0 0;white-space:pre">NBS</div>
<div style="position:absolute;left:482px;top:85.7px;width:0.8px;height:41.39999999999999px;background:repeating-linear-gradient(#b0b0b0 0 1px,transparent 1px 2px)"></div>
<div style="position:absolute;left:480px;top:82px;width:5px;height:5px;border:1px solid #c4c4bc;background:#fbfbf8"></div>
<div style="position:absolute;left:481px;top:84px;width:3px;height:1px;background:#8a8a8a"></div>
<div style="position:absolute;left:486.7px;top:80.9px;width:5.8px;height:5px;background:linear-gradient(#e8d070,#b09030);border:0.6px solid #806020"></div>
<div style="position:absolute;left:493.2px;top:80.5px;white-space:nowrap;font:bold 5.6px/6px 'Liberation Mono';color:#000;transform:scaleX(0.72);transform-origin:0 0">Parts</div>
<div style="position:absolute;left:488px;top:88px;width:5px;height:5px;border:1px solid #c4c4bc;background:#fbfbf8"></div>
<div style="position:absolute;left:489px;top:90px;width:3px;height:1px;background:#8a8a8a"></div>
<div style="position:absolute;left:490px;top:89px;width:1px;height:3px;background:#8a8a8a"></div>
<div style="position:absolute;left:481.8px;top:89.9px;width:6.0px;height:0.8px;background:repeating-linear-gradient(90deg,#b0b0b0 0 1px,transparent 1px 2px)"></div>
<svg style="position:absolute;left:494px;top:86.50px" width="7" height="7"><path d="M3.5 .5v6M1 2.5h5M1 2.5v2M6 2.5v2M2 6.5h3" stroke="#1030c0" stroke-width=".9" fill="none"/><circle cx="5.8" cy="5.5" r=".9" fill="#20a090"/></svg>
<div style="position:absolute;left:502.3px;top:86.9px;white-space:nowrap;font:bold 5.6px/6px 'Liberation Mono';color:#000;transform:scaleX(0.72);transform-origin:0 0">CS_Deck</div>
<div style="position:absolute;left:488px;top:94px;width:5px;height:5px;border:1px solid #c4c4bc;background:#fbfbf8"></div>
<div style="position:absolute;left:489px;top:96px;width:3px;height:1px;background:#8a8a8a"></div>
<div style="position:absolute;left:490px;top:95px;width:1px;height:3px;background:#8a8a8a"></div>
<div style="position:absolute;left:481.8px;top:96.10000000000001px;width:6.0px;height:0.8px;background:repeating-linear-gradient(90deg,#b0b0b0 0 1px,transparent 1px 2px)"></div>
<svg style="position:absolute;left:494px;top:92.70px" width="7" height="7"><path d="M3.5 .5v6M1 2.5h5M1 2.5v2M6 2.5v2M2 6.5h3" stroke="#1030c0" stroke-width=".9" fill="none"/><circle cx="5.8" cy="5.5" r=".9" fill="#20a090"/></svg>
<div style="position:absolute;left:502.3px;top:93.10000000000001px;white-space:nowrap;font:bold 5.6px/6px 'Liberation Mono';color:#000;transform:scaleX(0.72);transform-origin:0 0">CS_DeckHouse</div>
<div style="position:absolute;left:488px;top:101px;width:5px;height:5px;border:1px solid #c4c4bc;background:#fbfbf8"></div>
<div style="position:absolute;left:489px;top:103px;width:3px;height:1px;background:#8a8a8a"></div>
<div style="position:absolute;left:490px;top:102px;width:1px;height:3px;background:#8a8a8a"></div>
<div style="position:absolute;left:481.8px;top:102.30000000000001px;width:6.0px;height:0.8px;background:repeating-linear-gradient(90deg,#b0b0b0 0 1px,transparent 1px 2px)"></div>
<svg style="position:absolute;left:494px;top:98.90px" width="7" height="7"><path d="M3.5 .5v6M1 2.5h5M1 2.5v2M6 2.5v2M2 6.5h3" stroke="#1030c0" stroke-width=".9" fill="none"/><circle cx="5.8" cy="5.5" r=".9" fill="#20a090"/></svg>
<div style="position:absolute;left:502.3px;top:99.30000000000001px;white-space:nowrap;font:bold 5.6px/6px 'Liberation Mono';color:#000;transform:scaleX(0.72);transform-origin:0 0">CS_Hull</div>
<div style="position:absolute;left:488px;top:107px;width:5px;height:5px;border:1px solid #c4c4bc;background:#fbfbf8"></div>
<div style="position:absolute;left:489px;top:109px;width:3px;height:1px;background:#8a8a8a"></div>
<div style="position:absolute;left:490px;top:108px;width:1px;height:3px;background:#8a8a8a"></div>
<div style="position:absolute;left:481.8px;top:108.5px;width:6.0px;height:0.8px;background:repeating-linear-gradient(90deg,#b0b0b0 0 1px,transparent 1px 2px)"></div>
<svg style="position:absolute;left:494px;top:105.10px" width="7" height="7"><rect x=".6" y="1" width="5.8" height="5.2" fill="#708060" stroke="#303030" stroke-width=".5"/><path d="M1 5l5-3" stroke="#e0d040" stroke-width=".9"/></svg>
<div style="position:absolute;left:502.3px;top:105.5px;white-space:nowrap;font:bold 5.6px/6px 'Liberation Mono';color:#000;transform:scaleX(0.72);transform-origin:0 0">DeckHouse</div>
<div style="position:absolute;left:488px;top:113px;width:5px;height:5px;border:1px solid #c4c4bc;background:#fbfbf8"></div>
<div style="position:absolute;left:489px;top:115px;width:3px;height:1px;background:#8a8a8a"></div>
<div style="position:absolute;left:490px;top:114px;width:1px;height:3px;background:#8a8a8a"></div>
<div style="position:absolute;left:481.8px;top:114.7px;width:6.0px;height:0.8px;background:repeating-linear-gradient(90deg,#b0b0b0 0 1px,transparent 1px 2px)"></div>
<svg style="position:absolute;left:494px;top:111.30px" width="7" height="7"><path d="M.8 2.5h5.4v3.6H.8zM2 2.5V1h3v1.5" fill="#fff" stroke="#333" stroke-width=".6"/></svg>
<div style="position:absolute;left:502.3px;top:111.7px;white-space:nowrap;font:bold 5.6px/6px 'Liberation Mono';color:#000;transform:scaleX(0.72);transform-origin:0 0">Hull</div>
<div style="position:absolute;left:488px;top:119px;width:5px;height:5px;border:1px solid #c4c4bc;background:#fbfbf8"></div>
<div style="position:absolute;left:489px;top:121px;width:3px;height:1px;background:#8a8a8a"></div>
<div style="position:absolute;left:490px;top:120px;width:1px;height:3px;background:#8a8a8a"></div>
<div style="position:absolute;left:481.8px;top:120.9px;width:6.0px;height:0.8px;background:repeating-linear-gradient(90deg,#b0b0b0 0 1px,transparent 1px 2px)"></div>
<svg style="position:absolute;left:494px;top:117.50px" width="7" height="7"><rect x=".6" y="1" width="5.8" height="5.2" fill="#708060" stroke="#303030" stroke-width=".5"/><path d="M1 5l5-3" stroke="#e0d040" stroke-width=".9"/></svg>
<div style="position:absolute;left:502.3px;top:117.9px;white-space:nowrap;font:bold 5.6px/6px 'Liberation Mono';color:#000;transform:scaleX(0.72);transform-origin:0 0">Structure</div>
<div style="position:absolute;left:488px;top:125px;width:5px;height:5px;border:1px solid #c4c4bc;background:#fbfbf8"></div>
<div style="position:absolute;left:489px;top:127px;width:3px;height:1px;background:#8a8a8a"></div>
<div style="position:absolute;left:490px;top:126px;width:1px;height:3px;background:#8a8a8a"></div>
<div style="position:absolute;left:481.8px;top:127.1px;width:6.0px;height:0.8px;background:repeating-linear-gradient(90deg,#b0b0b0 0 1px,transparent 1px 2px)"></div>
<svg style="position:absolute;left:494px;top:123.70px" width="7" height="7"><rect x=".5" y="1" width="3" height="5.5" fill="#c0a020"/><circle cx="4.2" cy="4" r="2.4" fill="#10a0a0" stroke="#205060" stroke-width=".5"/></svg>
<div style="position:absolute;left:502.3px;top:124.1px;white-space:nowrap;font:bold 5.6px/6px 'Liberation Mono';color:#000;transform:scaleX(0.72);transform-origin:0 0">VertRotatingEquipmen</div>
<div style="position:absolute;left:131px;top:393.5px;width:425px;height:1px;background:#d8d4c4"></div>
<div style="position:absolute;left:477.5px;top:395.3px;width:38.5px;height:6.6px;border:0.7px solid #aca899;border-right-color:#fff;border-bottom-color:#fff"></div>
<div style="position:absolute;left:479.5px;top:395.5px;white-space:nowrap;font:bold 5.4px/6.6px 'Liberation Mono';color:#333;transform:scaleX(0.68);transform-origin:0 0">2006-6-14</div>
<div style="position:absolute;left:517px;top:395.3px;width:38.5px;height:6.6px;border:0.7px solid #aca899;border-right-color:#fff;border-bottom-color:#fff"></div>
<div style="position:absolute;left:519.5px;top:395.5px;white-space:nowrap;font:bold 5.4px/6.6px 'Liberation Mono';color:#333;transform:scaleX(0.68);transform-origin:0 0">8:54</div>
<div style="position:absolute;left:28px;top:403px;width:528px;height:12px;background:linear-gradient(#3f8cf3 0,#245edb 15%,#2257d5 85%,#1941a5 100%)"></div>
<div style="position:absolute;left:28px;top:403px;width:39.5px;height:12px;background:linear-gradient(#4cb04a 0,#37952f 20%,#3a9a35 80%,#2a7a28 100%);border-radius:0 5px 5px 0"></div>
<div style="position:absolute;left:31px;top:405.5px;width:6px;height:7px;background:conic-gradient(#f04020 0 25%,#40b030 0 50%,#f0c020 0 75%,#2050e0 0);border-radius:1px;opacity:.9"></div>
<svg style="position:absolute;left:41px;top:405.8px;overflow:visible" width="15.0" height="6"><path d="M0.00 0.90L6.50 0.90M3.25 0.00L3.25 3.30M0.97 2.70L5.52 2.70M1.30 3.30L1.30 5.70M5.20 3.30L5.20 5.70M1.30 5.40L5.20 5.40M8.47 0.30L8.47 5.70M7.50 2.10L9.45 1.50M10.05 0.90L14.00 0.90M10.05 0.90L10.05 5.10M14.00 0.90L14.00 5.80M10.05 3.00L14.00 3.00M10.05 5.10L14.00 5.10" stroke="#fff" stroke-opacity="0.8" stroke-width="0.9" fill="none"/></svg>
<svg style="position:absolute;left:73px;top:405px" width="7" height="7"><circle cx="3.5" cy="3.5" r="3" fill="#f0c030"/><path d="M3.5 .5A3 3 0 0 1 6.5 3.5H3.5z" fill="#e03030"/><path d="M6.5 3.5A3 3 0 0 1 3.5 6.5V3.5z" fill="#30a040"/><circle cx="3.5" cy="3.5" r="1.3" fill="#fff"/></svg>
<svg style="position:absolute;left:82.3px;top:405px" width="7" height="7"><circle cx="3.6" cy="3.6" r="2.4" fill="none" stroke="#50b0f0" stroke-width="1.3"/><path d="M1.5 3.6h4.2" stroke="#50b0f0" stroke-width=".9"/><path d="M.6 5.5C2 1.5 5.5.3 6.6 1" fill="none" stroke="#e0f0ff" stroke-width=".6"/></svg>
<svg style="position:absolute;left:91.5px;top:405px" width="7" height="7"><rect x=".8" y="1.5" width="5.5" height="4.5" rx="1" fill="#d8e4f8" stroke="#6080c0" stroke-width=".5"/><path d="M1.5 2.5l2 1.5 2-1.5" stroke="#4060a0" stroke-width=".5" fill="none"/></svg>
<div style="position:absolute;left:104px;top:404.2px;width:65px;height:10px;background:#3c81f3;border-radius:2px;box-shadow:inset 0 0 0 0.6px #6aa0f8"></div>
<div style="position:absolute;left:106px;top:405.2px;width:6.5px;height:7.5px;background:linear-gradient(135deg,#40c080,#107050,#60d0a0);border:0.6px solid #d0f0e0"></div>
<div style="position:absolute;left:115px;top:404.2px;white-space:nowrap;font:4.8px/10px 'Liberation Sans';color:#fff">AutoCAD 2006 - [</div>
<div style="position:absolute;left:170px;top:404.2px;width:60px;height:10px;background:#3c81f3;border-radius:2px;box-shadow:inset 0 0 0 0.6px #6aa0f8"></div>
<div style="position:absolute;left:172px;top:405.2px;width:6px;height:7px;background:radial-gradient(#f0e040 25%,#d04040 45%,transparent 70%)"></div>
<svg style="position:absolute;left:180px;top:406.3px;overflow:visible" width="15.0" height="5"><path d="M0.60 0.30L0.60 4.70M0.00 1.75L1.20 1.25M0.00 3.75L1.20 3.00M1.80 0.75L4.00 0.75M1.80 0.75L1.80 4.25M4.00 0.75L4.00 4.80M1.80 2.50L4.00 2.50M1.80 4.25L4.00 4.25M5.00 0.75L9.00 0.75M7.00 0.00L7.00 2.75M5.60 2.25L8.40 2.25M5.80 2.75L5.80 4.75M8.20 2.75L8.20 4.75M5.80 4.50L8.20 4.50M10.60 0.30L10.60 4.70M10.00 1.75L11.20 1.25M10.00 3.75L11.20 3.00M11.80 0.75L14.00 0.75M11.80 0.75L11.80 4.25M14.00 0.75L14.00 4.80M11.80 2.50L14.00 2.50" stroke="#fff" stroke-opacity="0.85" stroke-width="0.75" fill="none"/></svg>
<div style="position:absolute;left:196px;top:404.2px;white-space:nowrap;font:5px/10px 'Liberation Sans';color:#fff">-</div>
<svg style="position:absolute;left:200px;top:406.3px;overflow:visible" width="10.0" height="5"><path d="M0.60 0.30L0.60 4.70M0.00 1.75L1.20 1.25M0.00 3.75L1.20 3.00M1.80 0.75L4.00 0.75M1.80 0.75L1.80 4.25M4.00 0.75L4.00 4.80M1.80 2.50L4.00 2.50M5.60 0.30L5.60 4.70M5.00 1.75L6.20 1.25M6.80 0.75L9.00 0.75M6.80 0.75L6.80 4.25M9.00 0.75L9.00 4.80M6.80 2.50L9.00 2.50M6.80 4.25L9.00 4.25" stroke="#fff" stroke-opacity="0.85" stroke-width="0.75" fill="none"/></svg>
<div style="position:absolute;left:231.5px;top:404.2px;width:71px;height:10px;background:#1e4fc4;border-radius:2px;box-shadow:inset 0.8px 0.8px 0 #163a96"></div>
<div style="position:absolute;left:233px;top:405.2px;width:6px;height:7px;border-radius:50%;background:radial-gradient(#fff 0 20%,#c02040 35%,#4020a0 70%)"></div>
<svg style="position:absolute;left:241px;top:406.3px;overflow:visible" width="50.0" height="5"><path d="M0.60 0.30L0.60 4.70M0.00 1.75L1.20 1.25M1.80 0.75L4.00 0.75M1.80 0.75L1.80 4.25M4.00 0.75L4.00 4.80M1.80 2.50L4.00 2.50M1.80 4.25L4.00 4.25M5.00 0.75L9.00 0.75M7.00 0.00L7.00 2.75M5.60 2.25L8.40 2.25M5.80 2.75L5.80 4.75M8.20 2.75L8.20 4.75M5.80 4.50L8.20 4.50M10.60 0.30L10.60 4.70M10.00 1.75L11.20 1.25M10.00 3.75L11.20 3.00M11.80 0.75L14.00 0.75M11.80 0.75L11.80 4.25M14.00 0.75L14.00 4.80M11.80 2.50L14.00 2.50M15.40 1.00L18.60 1.00M17.00 0.10L16.20 3.00M16.20 3.00L15.00 4.80M16.80 2.50L19.00 4.80M15.80 2.75L18.60 2.75M17.40 0.25L18.40 1.75M20.60 0.30L20.60 4.70M20.00 1.75L21.20 1.25M20.00 3.75L21.20 3.00M21.80 0.75L24.00 0.75M21.80 0.75L21.80 4.25M24.00 0.75L24.00 4.80M21.80 2.50L24.00 2.50M25.60 0.30L25.60 4.70M25.00 1.75L26.20 1.25M26.80 0.75L29.00 0.75M26.80 0.75L26.80 4.25M29.00 0.75L29.00 4.80M26.80 2.50L29.00 2.50M30.60 0.30L30.60 4.70M30.00 1.75L31.20 1.25M30.00 3.75L31.20 3.00M31.80 0.75L34.00 0.75M31.80 0.75L31.80 4.25M34.00 0.75L34.00 4.80M31.80 2.50L34.00 2.50M31.80 4.25L34.00 4.25M35.40 1.00L38.60 1.00M37.00 0.10L36.20 3.00M36.20 3.00L35.00 4.80M36.80 2.50L39.00 4.80M35.80 2.75L38.60 2.75M40.60 0.30L40.60 4.70M40.00 1.75L41.20 1.25M41.80 0.75L44.00 0.75M41.80 0.75L41.80 4.25M44.00 0.75L44.00 4.80M41.80 2.50L44.00 2.50M45.40 1.00L48.60 1.00M47.00 0.10L46.20 3.00M46.20 3.00L45.00 4.80M46.80 2.50L49.00 4.80M45.80 2.75L48.60 2.75" stroke="#fff" stroke-opacity="0.85" stroke-width="0.75" fill="none"/></svg>
<svg style="position:absolute;left:466px;top:406.3px;overflow:visible" width="9.6" height="5"><path d="M0.00 0.75L3.80 0.75M1.90 0.00L1.90 2.75M0.57 2.25L3.23 2.25M0.76 2.75L0.76 4.75M3.04 2.75L3.04 4.75M0.76 4.50L3.04 4.50M5.37 0.30L5.37 4.70M4.80 1.75L5.94 1.25M6.54 0.75L8.60 0.75M6.54 0.75L6.54 4.25M8.60 0.75L8.60 4.80M6.54 2.50L8.60 2.50M6.54 4.25L8.60 4.25" stroke="#c8d8f8" stroke-opacity="0.8" stroke-width="0.75" fill="none"/></svg>
<div style="position:absolute;left:478.8px;top:403.6px;white-space:nowrap;font:bold 6px/8px 'Liberation Sans';color:#dfe8ff">&#710;</div>
<div style="position:absolute;left:486.6px;top:407px;width:6.8px;height:4px;background:linear-gradient(#d8d8d0,#909088);border-radius:1px"></div>
<div style="position:absolute;left:496px;top:405.4px;width:5px;height:6px;background:#f0ecd0;border:0.6px solid #605830"></div>
<div style="position:absolute;left:506px;top:405.5px;width:3.5px;height:6px;background:linear-gradient(#c0d0f0,#6080c0);border-radius:1px"></div>
<div style="position:absolute;left:512.8px;top:403px;width:43.2px;height:12px;background:linear-gradient(#18a6f8 0,#0c8ae8 20%,#0b8ae6 85%,#0a6ccc 100%);border-left:0.8px solid #1a5cc0"></div>
<div style="position:absolute;left:513.8px;top:405.8px;width:5.6px;height:6px;border-radius:50%;background:radial-gradient(#fff 0 25%,#3090e8 35%,#d0e8ff 80%)"></div>
<div style="position:absolute;left:520.6px;top:405.4px;width:6px;height:6.4px;background:linear-gradient(135deg,#fff 0 30%,#303060 30% 70%,#d0d0f0 70%)"></div>
<div style="position:absolute;left:528.3px;top:406.4px;width:7.7px;height:4.6px;background:#e02828;border-radius:3px 3px 1px 1px"></div>
<div style="position:absolute;left:539.3px;top:403.2px;white-space:nowrap;font:4.8px/11px 'Liberation Sans';color:#fff">8:54</div>
</body></html>
